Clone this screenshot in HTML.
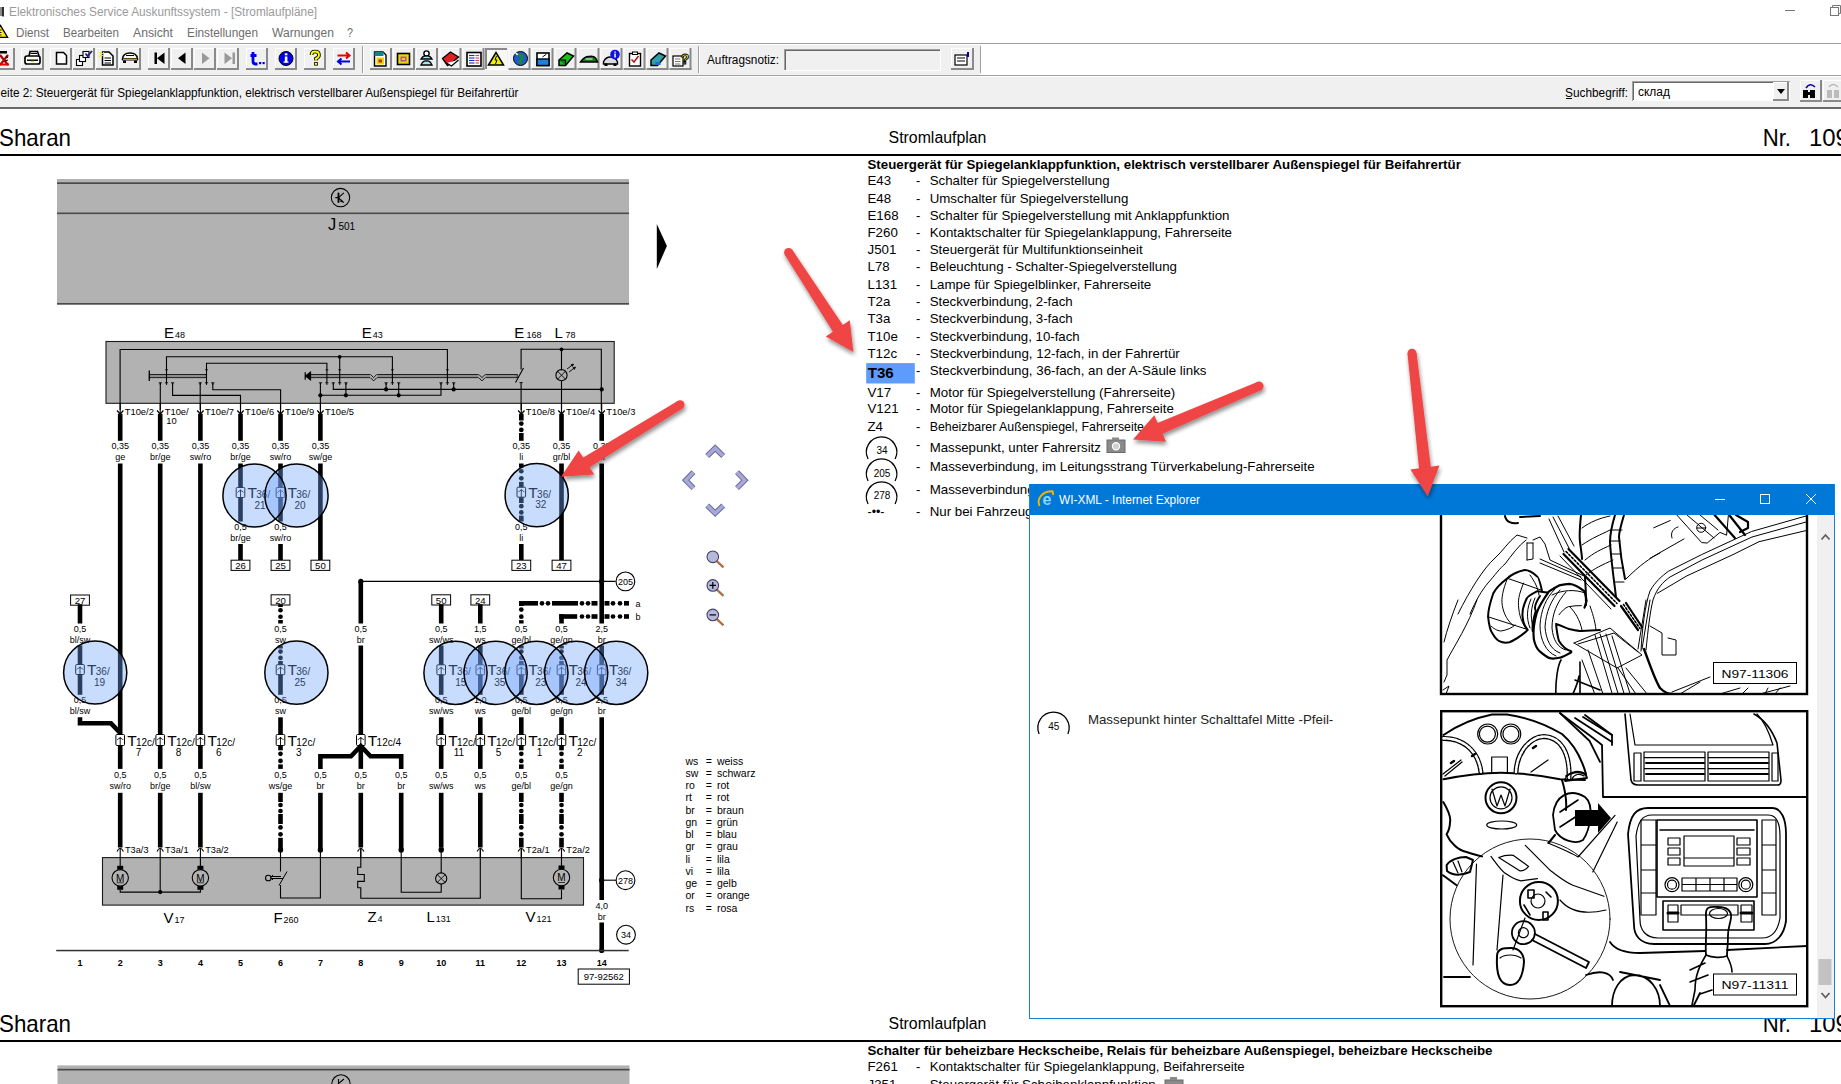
<!DOCTYPE html>
<html><head><meta charset="utf-8"><style>
html,body{margin:0;padding:0;background:#fff;overflow:hidden;width:1841px;height:1084px}
svg{display:block;font-family:"Liberation Sans", sans-serif}
</style></head><body>
<svg width="1841" height="1084" viewBox="0 0 1841 1084">
<defs><filter id="sh" x="-30%" y="-30%" width="160%" height="160%"><feGaussianBlur in="SourceAlpha" stdDeviation="2"/><feOffset dx="1" dy="3" result="b"/><feComponentTransfer><feFuncA type="linear" slope="0.45"/></feComponentTransfer><feMerge><feMergeNode/><feMergeNode in="SourceGraphic"/></feMerge></filter></defs>
<rect x="0" y="0" width="1841" height="43" fill="#fff" stroke="none" stroke-width="1"/>
<rect x="0" y="7" width="3" height="9" fill="#8a8a8a" stroke="none" stroke-width="1"/>
<rect x="2.3" y="7" width="1.5" height="9.5" fill="#000" stroke="none" stroke-width="1"/>
<text x="9" y="16" font-size="12.5" fill="#9a9a9a" text-anchor="start" font-weight="normal" textLength="308" lengthAdjust="spacingAndGlyphs">Elektronisches Service Auskunftssystem - [Stromlaufpläne]</text>
<line x1="1785" y1="10.5" x2="1795" y2="10.5" stroke="#777" stroke-width="1"/>
<rect x="1830.5" y="7.5" width="8" height="8" fill="none" stroke="#777" stroke-width="1"/>
<path d="M1832.5 7.5 V5.5 H1840.5 V13.5 H1838.5" stroke="#777" stroke-width="1" fill="none"/>
<path d="M-7 37.3 L0.5 25.5 L7.6 37.3 Z" stroke="#000" stroke-width="1.3" fill="#ffee00"/>
<path d="M0 30 H1.5 M0 32.5 H1.5 M0 35 H1.5" stroke="#000" stroke-width="0.9" fill="none"/>
<text x="16" y="37" font-size="12.5" fill="#6d6d6d" text-anchor="start" font-weight="normal" textLength="33" lengthAdjust="spacingAndGlyphs">Dienst</text>
<text x="63" y="37" font-size="12.5" fill="#6d6d6d" text-anchor="start" font-weight="normal" textLength="56" lengthAdjust="spacingAndGlyphs">Bearbeiten</text>
<text x="133" y="37" font-size="12.5" fill="#6d6d6d" text-anchor="start" font-weight="normal" textLength="40" lengthAdjust="spacingAndGlyphs">Ansicht</text>
<text x="187" y="37" font-size="12.5" fill="#6d6d6d" text-anchor="start" font-weight="normal" textLength="71" lengthAdjust="spacingAndGlyphs">Einstellungen</text>
<text x="272" y="37" font-size="12.5" fill="#6d6d6d" text-anchor="start" font-weight="normal" textLength="62" lengthAdjust="spacingAndGlyphs">Warnungen</text>
<text x="347" y="37" font-size="12.5" fill="#6d6d6d" text-anchor="start" font-weight="normal" textLength="6" lengthAdjust="spacingAndGlyphs">?</text>
<rect x="0" y="43" width="1841" height="1" fill="#a0a0a0" stroke="none" stroke-width="1"/>
<rect x="0" y="44" width="1841" height="1" fill="#fff" stroke="none" stroke-width="1"/>
<rect x="0" y="45" width="981" height="30" fill="#f0f0f0" stroke="none" stroke-width="1"/>
<rect x="0" y="75" width="1841" height="1" fill="#a0a0a0" stroke="none" stroke-width="1"/>
<rect x="0" y="76" width="1841" height="1" fill="#fff" stroke="none" stroke-width="1"/>
<rect x="0" y="77" width="1841" height="31" fill="#f0f0f0" stroke="none" stroke-width="1"/>
<rect x="0" y="107" width="1841" height="2" fill="#6a6a6a" stroke="none" stroke-width="1"/>
<rect x="-9" y="48" width="24" height="22" fill="#f0f0f0" stroke="none" stroke-width="1"/>
<rect x="-9" y="48" width="24" height="1" fill="#fff" stroke="none" stroke-width="1"/>
<rect x="-9" y="48" width="1" height="22" fill="#fff" stroke="none" stroke-width="1"/>
<rect x="-9" y="68" width="24" height="2" fill="#8a8a8a" stroke="none" stroke-width="1"/>
<rect x="13" y="48" width="2" height="22" fill="#8a8a8a" stroke="none" stroke-width="1"/>
<rect x="21" y="48" width="23" height="22" fill="#f0f0f0" stroke="none" stroke-width="1"/>
<rect x="21" y="48" width="23" height="1" fill="#fff" stroke="none" stroke-width="1"/>
<rect x="21" y="48" width="1" height="22" fill="#fff" stroke="none" stroke-width="1"/>
<rect x="21" y="68" width="23" height="2" fill="#8a8a8a" stroke="none" stroke-width="1"/>
<rect x="42" y="48" width="2" height="22" fill="#8a8a8a" stroke="none" stroke-width="1"/>
<rect x="50" y="48" width="22" height="22" fill="#f0f0f0" stroke="none" stroke-width="1"/>
<rect x="50" y="48" width="22" height="1" fill="#fff" stroke="none" stroke-width="1"/>
<rect x="50" y="48" width="1" height="22" fill="#fff" stroke="none" stroke-width="1"/>
<rect x="50" y="68" width="22" height="2" fill="#8a8a8a" stroke="none" stroke-width="1"/>
<rect x="70" y="48" width="2" height="22" fill="#8a8a8a" stroke="none" stroke-width="1"/>
<rect x="73" y="48" width="22" height="22" fill="#f0f0f0" stroke="none" stroke-width="1"/>
<rect x="73" y="48" width="22" height="1" fill="#fff" stroke="none" stroke-width="1"/>
<rect x="73" y="48" width="1" height="22" fill="#fff" stroke="none" stroke-width="1"/>
<rect x="73" y="68" width="22" height="2" fill="#8a8a8a" stroke="none" stroke-width="1"/>
<rect x="93" y="48" width="2" height="22" fill="#8a8a8a" stroke="none" stroke-width="1"/>
<rect x="96" y="48" width="22" height="22" fill="#f0f0f0" stroke="none" stroke-width="1"/>
<rect x="96" y="48" width="22" height="1" fill="#fff" stroke="none" stroke-width="1"/>
<rect x="96" y="48" width="1" height="22" fill="#fff" stroke="none" stroke-width="1"/>
<rect x="96" y="68" width="22" height="2" fill="#8a8a8a" stroke="none" stroke-width="1"/>
<rect x="116" y="48" width="2" height="22" fill="#8a8a8a" stroke="none" stroke-width="1"/>
<rect x="119" y="48" width="22" height="22" fill="#f0f0f0" stroke="none" stroke-width="1"/>
<rect x="119" y="48" width="22" height="1" fill="#fff" stroke="none" stroke-width="1"/>
<rect x="119" y="48" width="1" height="22" fill="#fff" stroke="none" stroke-width="1"/>
<rect x="119" y="68" width="22" height="2" fill="#8a8a8a" stroke="none" stroke-width="1"/>
<rect x="139" y="48" width="2" height="22" fill="#8a8a8a" stroke="none" stroke-width="1"/>
<rect x="148" y="48" width="22" height="22" fill="#f0f0f0" stroke="none" stroke-width="1"/>
<rect x="148" y="48" width="22" height="1" fill="#fff" stroke="none" stroke-width="1"/>
<rect x="148" y="48" width="1" height="22" fill="#fff" stroke="none" stroke-width="1"/>
<rect x="148" y="68" width="22" height="2" fill="#8a8a8a" stroke="none" stroke-width="1"/>
<rect x="168" y="48" width="2" height="22" fill="#8a8a8a" stroke="none" stroke-width="1"/>
<rect x="171" y="48" width="22" height="22" fill="#f0f0f0" stroke="none" stroke-width="1"/>
<rect x="171" y="48" width="22" height="1" fill="#fff" stroke="none" stroke-width="1"/>
<rect x="171" y="48" width="1" height="22" fill="#fff" stroke="none" stroke-width="1"/>
<rect x="171" y="68" width="22" height="2" fill="#8a8a8a" stroke="none" stroke-width="1"/>
<rect x="191" y="48" width="2" height="22" fill="#8a8a8a" stroke="none" stroke-width="1"/>
<rect x="194" y="48" width="22" height="22" fill="#f0f0f0" stroke="none" stroke-width="1"/>
<rect x="194" y="48" width="22" height="1" fill="#fff" stroke="none" stroke-width="1"/>
<rect x="194" y="48" width="1" height="22" fill="#fff" stroke="none" stroke-width="1"/>
<rect x="194" y="68" width="22" height="2" fill="#8a8a8a" stroke="none" stroke-width="1"/>
<rect x="214" y="48" width="2" height="22" fill="#8a8a8a" stroke="none" stroke-width="1"/>
<rect x="217" y="48" width="22" height="22" fill="#f0f0f0" stroke="none" stroke-width="1"/>
<rect x="217" y="48" width="22" height="1" fill="#fff" stroke="none" stroke-width="1"/>
<rect x="217" y="48" width="1" height="22" fill="#fff" stroke="none" stroke-width="1"/>
<rect x="217" y="68" width="22" height="2" fill="#8a8a8a" stroke="none" stroke-width="1"/>
<rect x="237" y="48" width="2" height="22" fill="#8a8a8a" stroke="none" stroke-width="1"/>
<rect x="246" y="48" width="22" height="22" fill="#f0f0f0" stroke="none" stroke-width="1"/>
<rect x="246" y="48" width="22" height="1" fill="#fff" stroke="none" stroke-width="1"/>
<rect x="246" y="48" width="1" height="22" fill="#fff" stroke="none" stroke-width="1"/>
<rect x="246" y="68" width="22" height="2" fill="#8a8a8a" stroke="none" stroke-width="1"/>
<rect x="266" y="48" width="2" height="22" fill="#8a8a8a" stroke="none" stroke-width="1"/>
<rect x="275" y="48" width="22" height="22" fill="#f0f0f0" stroke="none" stroke-width="1"/>
<rect x="275" y="48" width="22" height="1" fill="#fff" stroke="none" stroke-width="1"/>
<rect x="275" y="48" width="1" height="22" fill="#fff" stroke="none" stroke-width="1"/>
<rect x="275" y="68" width="22" height="2" fill="#8a8a8a" stroke="none" stroke-width="1"/>
<rect x="295" y="48" width="2" height="22" fill="#8a8a8a" stroke="none" stroke-width="1"/>
<rect x="304" y="48" width="22" height="22" fill="#f0f0f0" stroke="none" stroke-width="1"/>
<rect x="304" y="48" width="22" height="1" fill="#fff" stroke="none" stroke-width="1"/>
<rect x="304" y="48" width="1" height="22" fill="#fff" stroke="none" stroke-width="1"/>
<rect x="304" y="68" width="22" height="2" fill="#8a8a8a" stroke="none" stroke-width="1"/>
<rect x="324" y="48" width="2" height="22" fill="#8a8a8a" stroke="none" stroke-width="1"/>
<rect x="333" y="48" width="22" height="22" fill="#f0f0f0" stroke="none" stroke-width="1"/>
<rect x="333" y="48" width="22" height="1" fill="#fff" stroke="none" stroke-width="1"/>
<rect x="333" y="48" width="1" height="22" fill="#fff" stroke="none" stroke-width="1"/>
<rect x="333" y="68" width="22" height="2" fill="#8a8a8a" stroke="none" stroke-width="1"/>
<rect x="353" y="48" width="2" height="22" fill="#8a8a8a" stroke="none" stroke-width="1"/>
<rect x="362" y="46" width="1" height="27" fill="#a0a0a0" stroke="none" stroke-width="1"/>
<rect x="363" y="46" width="1" height="27" fill="#fff" stroke="none" stroke-width="1"/>
<rect x="370" y="48" width="22" height="22" fill="#f0f0f0" stroke="none" stroke-width="1"/>
<rect x="370" y="48" width="22" height="1" fill="#fff" stroke="none" stroke-width="1"/>
<rect x="370" y="48" width="1" height="22" fill="#fff" stroke="none" stroke-width="1"/>
<rect x="370" y="68" width="22" height="2" fill="#8a8a8a" stroke="none" stroke-width="1"/>
<rect x="390" y="48" width="2" height="22" fill="#8a8a8a" stroke="none" stroke-width="1"/>
<rect x="393" y="48" width="22" height="22" fill="#f0f0f0" stroke="none" stroke-width="1"/>
<rect x="393" y="48" width="22" height="1" fill="#fff" stroke="none" stroke-width="1"/>
<rect x="393" y="48" width="1" height="22" fill="#fff" stroke="none" stroke-width="1"/>
<rect x="393" y="68" width="22" height="2" fill="#8a8a8a" stroke="none" stroke-width="1"/>
<rect x="413" y="48" width="2" height="22" fill="#8a8a8a" stroke="none" stroke-width="1"/>
<rect x="416" y="48" width="22" height="22" fill="#f0f0f0" stroke="none" stroke-width="1"/>
<rect x="416" y="48" width="22" height="1" fill="#fff" stroke="none" stroke-width="1"/>
<rect x="416" y="48" width="1" height="22" fill="#fff" stroke="none" stroke-width="1"/>
<rect x="416" y="68" width="22" height="2" fill="#8a8a8a" stroke="none" stroke-width="1"/>
<rect x="436" y="48" width="2" height="22" fill="#8a8a8a" stroke="none" stroke-width="1"/>
<rect x="439.5" y="48" width="22.0" height="22" fill="#f0f0f0" stroke="none" stroke-width="1"/>
<rect x="439.5" y="48" width="22.0" height="1" fill="#fff" stroke="none" stroke-width="1"/>
<rect x="439.5" y="48" width="1" height="22" fill="#fff" stroke="none" stroke-width="1"/>
<rect x="439.5" y="68" width="22.0" height="2" fill="#8a8a8a" stroke="none" stroke-width="1"/>
<rect x="459.5" y="48" width="2" height="22" fill="#8a8a8a" stroke="none" stroke-width="1"/>
<rect x="462.5" y="48" width="22.0" height="22" fill="#f0f0f0" stroke="none" stroke-width="1"/>
<rect x="462.5" y="48" width="22.0" height="1" fill="#fff" stroke="none" stroke-width="1"/>
<rect x="462.5" y="48" width="1" height="22" fill="#fff" stroke="none" stroke-width="1"/>
<rect x="462.5" y="68" width="22.0" height="2" fill="#8a8a8a" stroke="none" stroke-width="1"/>
<rect x="482.5" y="48" width="2" height="22" fill="#8a8a8a" stroke="none" stroke-width="1"/>
<rect x="485" y="48" width="22" height="22" fill="#f7f7f7" stroke="none" stroke-width="1"/>
<rect x="485" y="48" width="22" height="2" fill="#8a8a8a" stroke="none" stroke-width="1"/>
<rect x="485" y="48" width="2" height="22" fill="#8a8a8a" stroke="none" stroke-width="1"/>
<rect x="485" y="69" width="22" height="1" fill="#fff" stroke="none" stroke-width="1"/>
<rect x="508.5" y="48" width="22.0" height="22" fill="#f0f0f0" stroke="none" stroke-width="1"/>
<rect x="508.5" y="48" width="22.0" height="1" fill="#fff" stroke="none" stroke-width="1"/>
<rect x="508.5" y="48" width="1" height="22" fill="#fff" stroke="none" stroke-width="1"/>
<rect x="508.5" y="68" width="22.0" height="2" fill="#8a8a8a" stroke="none" stroke-width="1"/>
<rect x="528.5" y="48" width="2" height="22" fill="#8a8a8a" stroke="none" stroke-width="1"/>
<rect x="531.5" y="48" width="22.0" height="22" fill="#f0f0f0" stroke="none" stroke-width="1"/>
<rect x="531.5" y="48" width="22.0" height="1" fill="#fff" stroke="none" stroke-width="1"/>
<rect x="531.5" y="48" width="1" height="22" fill="#fff" stroke="none" stroke-width="1"/>
<rect x="531.5" y="68" width="22.0" height="2" fill="#8a8a8a" stroke="none" stroke-width="1"/>
<rect x="551.5" y="48" width="2" height="22" fill="#8a8a8a" stroke="none" stroke-width="1"/>
<rect x="554.5" y="48" width="22.0" height="22" fill="#f0f0f0" stroke="none" stroke-width="1"/>
<rect x="554.5" y="48" width="22.0" height="1" fill="#fff" stroke="none" stroke-width="1"/>
<rect x="554.5" y="48" width="1" height="22" fill="#fff" stroke="none" stroke-width="1"/>
<rect x="554.5" y="68" width="22.0" height="2" fill="#8a8a8a" stroke="none" stroke-width="1"/>
<rect x="574.5" y="48" width="2" height="22" fill="#8a8a8a" stroke="none" stroke-width="1"/>
<rect x="577.5" y="48" width="22.0" height="22" fill="#f0f0f0" stroke="none" stroke-width="1"/>
<rect x="577.5" y="48" width="22.0" height="1" fill="#fff" stroke="none" stroke-width="1"/>
<rect x="577.5" y="48" width="1" height="22" fill="#fff" stroke="none" stroke-width="1"/>
<rect x="577.5" y="68" width="22.0" height="2" fill="#8a8a8a" stroke="none" stroke-width="1"/>
<rect x="597.5" y="48" width="2" height="22" fill="#8a8a8a" stroke="none" stroke-width="1"/>
<rect x="600.5" y="48" width="22.0" height="22" fill="#f0f0f0" stroke="none" stroke-width="1"/>
<rect x="600.5" y="48" width="22.0" height="1" fill="#fff" stroke="none" stroke-width="1"/>
<rect x="600.5" y="48" width="1" height="22" fill="#fff" stroke="none" stroke-width="1"/>
<rect x="600.5" y="68" width="22.0" height="2" fill="#8a8a8a" stroke="none" stroke-width="1"/>
<rect x="620.5" y="48" width="2" height="22" fill="#8a8a8a" stroke="none" stroke-width="1"/>
<rect x="623.5" y="48" width="22.0" height="22" fill="#f0f0f0" stroke="none" stroke-width="1"/>
<rect x="623.5" y="48" width="22.0" height="1" fill="#fff" stroke="none" stroke-width="1"/>
<rect x="623.5" y="48" width="1" height="22" fill="#fff" stroke="none" stroke-width="1"/>
<rect x="623.5" y="68" width="22.0" height="2" fill="#8a8a8a" stroke="none" stroke-width="1"/>
<rect x="643.5" y="48" width="2" height="22" fill="#8a8a8a" stroke="none" stroke-width="1"/>
<rect x="646.5" y="48" width="22.0" height="22" fill="#f0f0f0" stroke="none" stroke-width="1"/>
<rect x="646.5" y="48" width="22.0" height="1" fill="#fff" stroke="none" stroke-width="1"/>
<rect x="646.5" y="48" width="1" height="22" fill="#fff" stroke="none" stroke-width="1"/>
<rect x="646.5" y="68" width="22.0" height="2" fill="#8a8a8a" stroke="none" stroke-width="1"/>
<rect x="666.5" y="48" width="2" height="22" fill="#8a8a8a" stroke="none" stroke-width="1"/>
<rect x="669.5" y="48" width="22.0" height="22" fill="#f0f0f0" stroke="none" stroke-width="1"/>
<rect x="669.5" y="48" width="22.0" height="1" fill="#fff" stroke="none" stroke-width="1"/>
<rect x="669.5" y="48" width="1" height="22" fill="#fff" stroke="none" stroke-width="1"/>
<rect x="669.5" y="68" width="22.0" height="2" fill="#8a8a8a" stroke="none" stroke-width="1"/>
<rect x="689.5" y="48" width="2" height="22" fill="#8a8a8a" stroke="none" stroke-width="1"/>
<rect x="698" y="46" width="1" height="27" fill="#a0a0a0" stroke="none" stroke-width="1"/>
<rect x="699" y="46" width="1" height="27" fill="#fff" stroke="none" stroke-width="1"/>
<rect x="980" y="46" width="1" height="27" fill="#a0a0a0" stroke="none" stroke-width="1"/>
<rect x="0" y="51" width="7" height="2.5" fill="#000" stroke="none" stroke-width="1"/>
<path d="M0 55 L8 65 M8 55 L0 65" stroke="#b00000" stroke-width="2.2" fill="none"/>
<path d="M6 56 L8 58 M5 61 L8 60" stroke="#000" stroke-width="1" fill="none"/>
<rect x="0" y="63.5" width="9" height="2" fill="#e00000" stroke="none" stroke-width="1"/>
<path d="M29 56 L30 51.5 H37.5 L39 56" stroke="#000" stroke-width="1.6" fill="#fff"/>
<path d="M30.5 53.5 H37" stroke="#000" stroke-width="1" fill="none"/>
<path d="M25 58 Q25 56 27 56 H38 Q40 56 40 58 V62 Q40 64 38 64 H27 Q25 64 25 62 Z" stroke="#000" stroke-width="1.7" fill="#fff"/>
<rect x="27" y="59.5" width="11" height="1.5" fill="#000" stroke="none" stroke-width="1"/>
<rect x="31" y="60.8" width="3" height="1.4" fill="#e0e000" stroke="none" stroke-width="1"/>
<path d="M56.5 52.5 H63.5 L66.5 55.5 V64 H56.5 Z" stroke="#000" stroke-width="1.5" fill="#fff"/>
<rect x="76.5" y="59.5" width="6" height="6" fill="#fff" stroke="#000" stroke-width="1.1"/>
<rect x="79.5" y="55.5" width="6" height="6" fill="#fff" stroke="#000" stroke-width="1.1"/>
<rect x="83" y="51.5" width="6" height="6" fill="#fff" stroke="#000" stroke-width="1.1"/>
<path d="M85.5 53.5 L87.5 56 L92 51" stroke="#1a1aa0" stroke-width="1.8" fill="none"/>
<path d="M102.5 52 H109 L113 56 V65 H102.5 Z" stroke="#000" stroke-width="1.5" fill="#fff"/>
<path d="M104.5 58 H111 M104.5 60.5 H111 M104.5 63 H111" stroke="#000" stroke-width="1" fill="none"/>
<path d="M99 52 L104 57 M104 52 L99 57 M101.5 51 V58" stroke="#e8e800" stroke-width="1" fill="none"/>
<path d="M122.5 59 Q123 53 130 53 Q137 53 137.5 59 Z" stroke="#000" stroke-width="1.6" fill="#fff"/>
<path d="M126 55.5 H134" stroke="#000" stroke-width="1" fill="none"/>
<rect x="122" y="58" width="16" height="2.5" fill="#000" stroke="none" stroke-width="1"/>
<rect x="123" y="58.6" width="14" height="1.3" fill="#c8b400" stroke="none" stroke-width="1"/>
<rect x="123" y="60.5" width="3" height="2.5" fill="#000" stroke="none" stroke-width="1"/>
<rect x="134" y="60.5" width="3" height="2.5" fill="#000" stroke="none" stroke-width="1"/>
<rect x="154.5" y="52.5" width="2.5" height="11.5" fill="#000" stroke="none" stroke-width="1"/>
<path d="M164.5 52.5 L157 58.2 L164.5 64 Z" stroke="#000" stroke-width="0" fill="#000"/>
<path d="M185.5 52.5 L178 58.2 L185.5 64 Z" stroke="#000" stroke-width="0" fill="#000"/>
<path d="M202 52.5 L209.5 58.2 L202 64 Z" stroke="#999" stroke-width="0" fill="#999"/>
<path d="M224.5 52.5 L232 58.2 L224.5 64 Z" stroke="#999" stroke-width="0" fill="#999"/>
<rect x="232.5" y="52.5" width="2.5" height="11.5" fill="#999" stroke="none" stroke-width="1"/>
<path d="M253 52 V61.5 Q253 64 256 64 H257.5 M250.5 55.5 H256.5" stroke="#0000e8" stroke-width="2.8" fill="none"/>
<rect x="259" y="62" width="2.2" height="2.2" fill="#0000e8" stroke="none" stroke-width="1"/>
<rect x="262.5" y="62" width="2.2" height="2.2" fill="#0000e8" stroke="none" stroke-width="1"/>
<circle cx="286" cy="58.5" r="7" fill="#0000e8" stroke="#000" stroke-width="1"/>
<rect x="284.8" y="56.5" width="2.6" height="6" fill="#fff" stroke="none" stroke-width="1"/>
<rect x="284.8" y="53.3" width="2.6" height="2" fill="#fff" stroke="none" stroke-width="1"/>
<rect x="283.5" y="61.5" width="5" height="1.2" fill="#fff" stroke="none" stroke-width="1"/>
<path d="M311.5 55 Q311.5 51.5 315 51.5 Q319 51.5 319 55 Q319 57.5 316 58.5 V60.5" stroke="#000" stroke-width="3.6" fill="none"/>
<path d="M311.5 55 Q311.5 51.5 315 51.5 Q319 51.5 319 55 Q319 57.5 316 58.5 V60.5" stroke="#ffff00" stroke-width="1.8" fill="none"/>
<rect x="314.2" y="62" width="3.6" height="3.6" fill="#000" stroke="none" stroke-width="1"/>
<rect x="315" y="62.8" width="2" height="2" fill="#ffff00" stroke="none" stroke-width="1"/>
<path d="M337.5 55.5 H349 M346 52.5 L349.5 55.5 L346 58.5" stroke="#e80000" stroke-width="2" fill="none"/>
<path d="M350 61.5 H338.5 M341.5 58.5 L338 61.5 L341.5 64.5" stroke="#0000e8" stroke-width="2" fill="none"/>
<path d="M374.5 52 H383 L386 55 V66 H374.5 Z" stroke="#000" stroke-width="1.4" fill="#fff"/>
<rect x="374.5" y="52" width="9" height="4" fill="#1a8080" stroke="none" stroke-width="1"/>
<rect x="376.5" y="57.5" width="7.5" height="7" fill="#e8d800" stroke="none" stroke-width="1"/>
<rect x="378.5" y="59.5" width="3.5" height="3" fill="#c03030" stroke="none" stroke-width="1"/>
<rect x="397.5" y="53.5" width="12" height="11" fill="#e8d800" stroke="#000" stroke-width="1.6"/>
<rect x="400.5" y="56.5" width="6" height="5" fill="#b050b0" stroke="none" stroke-width="1"/>
<rect x="402" y="58" width="3" height="2" fill="#e8d800" stroke="none" stroke-width="1"/>
<circle cx="426.5" cy="53.5" r="2.6" fill="#fff" stroke="#000" stroke-width="1.4"/>
<path d="M421 59 Q423 55.5 426.5 56 Q430 55.5 432 59 Z" stroke="#000" stroke-width="1.3" fill="#9ee8f0"/>
<path d="M421 65 Q423 60.5 426.5 61 Q430 60.5 432 65 Z" stroke="#000" stroke-width="1.3" fill="#9ee8f0"/>
<path d="M442.5 58.5 L450.5 52 L458.5 57 L451.5 63 L447.5 65.5 Z" stroke="#000" stroke-width="1.4" fill="#e02020"/>
<path d="M446.5 63 L451.5 66 L458.5 60" stroke="#000" stroke-width="1.2" fill="#fff"/>
<rect x="467.0" y="52.5" width="14" height="13.5" fill="#fff" stroke="#000" stroke-width="1.6"/>
<line x1="469.0" y1="55.5" x2="474.5" y2="55.5" stroke="#1a30c0" stroke-width="1.1"/>
<line x1="475.5" y1="55.5" x2="479.0" y2="55.5" stroke="#e04040" stroke-width="1.1"/>
<line x1="469.0" y1="58" x2="474.5" y2="58" stroke="#1a30c0" stroke-width="1.1"/>
<line x1="475.5" y1="58" x2="479.0" y2="58" stroke="#e04040" stroke-width="1.1"/>
<line x1="469.0" y1="60.5" x2="474.5" y2="60.5" stroke="#1a30c0" stroke-width="1.1"/>
<line x1="475.5" y1="60.5" x2="479.0" y2="60.5" stroke="#e04040" stroke-width="1.1"/>
<line x1="469.0" y1="63" x2="474.5" y2="63" stroke="#1a30c0" stroke-width="1.1"/>
<line x1="475.5" y1="63" x2="479.0" y2="63" stroke="#e04040" stroke-width="1.1"/>
<path d="M488.5 65 L496 52.5 L503.5 65 Z" stroke="#000" stroke-width="1.5" fill="#f0f000"/>
<path d="M496.5 56 L495 60 H497 L495.5 64" stroke="#000" stroke-width="1" fill="none"/>
<circle cx="520.5" cy="58.5" r="7" fill="#1e5cc8" stroke="#000" stroke-width="1"/>
<path d="M518.5 54 Q523.5 56 521.5 59 Q519.5 62 521.5 64" stroke="#1a8a2a" stroke-width="3" fill="none"/>
<path d="M515.5 54 Q516.5 53 517.5 55" stroke="#fff" stroke-width="1.5" fill="none"/>
<rect x="537.0" y="53" width="12" height="12.5" fill="#fff" stroke="#000" stroke-width="1.6"/>
<rect x="537.0" y="59" width="12" height="6.5" fill="#2080e0" stroke="#000" stroke-width="1.4"/>
<path d="M542.5 57 L546.5 54" stroke="#000" stroke-width="1" fill="none"/>
<path d="M559.0 60 L567.0 53 L573.5 56 L565.5 65.5 L559.0 65.5 Z" stroke="#000" stroke-width="1.5" fill="#18c018"/>
<path d="M559.0 60 H565.5 L565.5 65.5" stroke="#000" stroke-width="1.2" fill="#108a10"/>
<path d="M580.5 62 Q584.5 56 589.5 56.5 Q595.5 55 597.5 62 Z" stroke="#000" stroke-width="1.4" fill="#1a7a1a"/>
<path d="M585.5 59 H592.5" stroke="#fff" stroke-width="1" fill="none"/>
<path d="M603.5 62 Q605.5 57 610.5 57 Q615.5 57 617.5 62 V64 H603.5 Z" stroke="#000" stroke-width="1.4" fill="#ddd"/>
<rect x="604.5" y="63.5" width="3" height="2.5" fill="#000" stroke="none" stroke-width="1"/>
<rect x="613.5" y="63.5" width="3" height="2.5" fill="#000" stroke="none" stroke-width="1"/>
<circle cx="615.0" cy="54.5" r="4.8" fill="#1010e8" stroke="none" stroke-width="0"/>
<rect x="614.3" y="53.5" width="1.5" height="4" fill="#fff" stroke="none" stroke-width="1"/>
<rect x="614.3" y="51.5" width="1.5" height="1.2" fill="#fff" stroke="none" stroke-width="1"/>
<rect x="629.5" y="53.5" width="11" height="12.5" fill="#fff" stroke="#000" stroke-width="1.4"/>
<rect x="632.5" y="52" width="5" height="2.5" fill="#fff" stroke="#000" stroke-width="1"/>
<path d="M631.5 59.5 L634.0 62 L638.5 56" stroke="#c01010" stroke-width="1.5" fill="none"/>
<path d="M651.0 60 L659.0 53 L665.5 56 L657.5 65.5 L651.0 65.5 Z" stroke="#000" stroke-width="1.5" fill="#30a0a8"/>
<rect x="655.5" y="62" width="5" height="3" fill="#1a6ae0" stroke="none" stroke-width="1"/>
<rect x="673.0" y="56" width="10" height="10" fill="#fff" stroke="#000" stroke-width="1.2"/>
<path d="M675.0 59 H680.5 M675.0 61.5 H680.5 M675.0 64 H680.5" stroke="#666" stroke-width="0.9" fill="none"/>
<text x="685.0" y="64" font-size="14" fill="#ffff00" text-anchor="middle" font-weight="bold" stroke="#000" stroke-width="0.9">?</text>
<text x="707" y="64.4" font-size="12.5" fill="#000" text-anchor="start" font-weight="normal" textLength="72" lengthAdjust="spacingAndGlyphs">Auftragsnotiz:</text>
<rect x="784" y="49" width="157" height="22" fill="#f0f0f0" stroke="none" stroke-width="1"/>
<rect x="784" y="49" width="157" height="1" fill="#a0a0a0" stroke="none" stroke-width="1"/>
<rect x="784" y="49" width="1" height="22" fill="#a0a0a0" stroke="none" stroke-width="1"/>
<rect x="784" y="70" width="157" height="1" fill="#fff" stroke="none" stroke-width="1"/>
<rect x="940" y="49" width="1" height="22" fill="#fff" stroke="none" stroke-width="1"/>
<rect x="785" y="50" width="155" height="1" fill="#696969" stroke="none" stroke-width="1"/>
<rect x="785" y="50" width="1" height="20" fill="#696969" stroke="none" stroke-width="1"/>
<rect x="951" y="48" width="23" height="22" fill="#f0f0f0" stroke="none" stroke-width="1"/>
<rect x="951" y="48" width="23" height="1" fill="#fff" stroke="none" stroke-width="1"/>
<rect x="951" y="48" width="1" height="22" fill="#fff" stroke="none" stroke-width="1"/>
<rect x="951" y="68" width="23" height="2" fill="#8a8a8a" stroke="none" stroke-width="1"/>
<rect x="972" y="48" width="2" height="22" fill="#8a8a8a" stroke="none" stroke-width="1"/>
<rect x="955" y="55" width="12" height="10" fill="#fff" stroke="#000" stroke-width="1.2"/>
<path d="M957 58 H965 M957 61 H965" stroke="#000" stroke-width="1" fill="none"/>
<rect x="967" y="52" width="2" height="5" fill="#00a" stroke="none" stroke-width="1"/>
<text x="0.5" y="96.7" font-size="12.5" fill="#000" text-anchor="start" font-weight="normal" textLength="518" lengthAdjust="spacingAndGlyphs">eite 2: Steuergerät für Spiegelanklappfunktion, elektrisch verstellbarer Außenspiegel für Beifahrertür</text>
<text x="1565" y="97" font-size="12.5" fill="#000" text-anchor="start" font-weight="normal" textLength="63" lengthAdjust="spacingAndGlyphs">Suchbegriff:</text>
<line x1="1566" y1="98.5" x2="1572" y2="98.5" stroke="#000" stroke-width="1"/>
<rect x="1632" y="81" width="158" height="20" fill="#fff" stroke="none" stroke-width="1"/>
<rect x="1632" y="81" width="158" height="1" fill="#a0a0a0" stroke="none" stroke-width="1"/>
<rect x="1632" y="81" width="1" height="20" fill="#a0a0a0" stroke="none" stroke-width="1"/>
<rect x="1633" y="82" width="156" height="1" fill="#696969" stroke="none" stroke-width="1"/>
<rect x="1633" y="82" width="1" height="18" fill="#696969" stroke="none" stroke-width="1"/>
<text x="1638" y="96" font-size="12.5" fill="#000" text-anchor="start" font-weight="normal" textLength="32" lengthAdjust="spacingAndGlyphs">склад</text>
<rect x="1773" y="82" width="16" height="19" fill="#f0f0f0" stroke="none" stroke-width="1"/>
<rect x="1773" y="82" width="16" height="1" fill="#fff" stroke="none" stroke-width="1"/>
<rect x="1773" y="82" width="1" height="19" fill="#fff" stroke="none" stroke-width="1"/>
<rect x="1773" y="99" width="16" height="2" fill="#8a8a8a" stroke="none" stroke-width="1"/>
<rect x="1787" y="82" width="2" height="19" fill="#8a8a8a" stroke="none" stroke-width="1"/>
<path d="M1777 89 L1785 89 L1781 94 Z" stroke="#000" stroke-width="0" fill="#000"/>
<rect x="1800" y="80" width="22" height="22" fill="#f0f0f0" stroke="none" stroke-width="1"/>
<rect x="1800" y="80" width="22" height="1" fill="#fff" stroke="none" stroke-width="1"/>
<rect x="1800" y="80" width="1" height="22" fill="#fff" stroke="none" stroke-width="1"/>
<rect x="1800" y="100" width="22" height="2" fill="#8a8a8a" stroke="none" stroke-width="1"/>
<rect x="1820" y="80" width="2" height="22" fill="#8a8a8a" stroke="none" stroke-width="1"/>
<rect x="1803" y="90" width="5" height="8" fill="#000" stroke="none" stroke-width="1"/>
<rect x="1810" y="90" width="5" height="8" fill="#000" stroke="none" stroke-width="1"/>
<rect x="1806" y="92" width="6" height="3" fill="#000" stroke="none" stroke-width="1"/>
<path d="M1806 88 Q1810 82 1815 87" stroke="#00a" stroke-width="1.6" fill="none"/>
<rect x="1823" y="80" width="22" height="22" fill="#f0f0f0" stroke="none" stroke-width="1"/>
<rect x="1823" y="80" width="22" height="1" fill="#fff" stroke="none" stroke-width="1"/>
<rect x="1823" y="80" width="1" height="22" fill="#fff" stroke="none" stroke-width="1"/>
<rect x="1823" y="100" width="22" height="2" fill="#8a8a8a" stroke="none" stroke-width="1"/>
<rect x="1843" y="80" width="2" height="22" fill="#8a8a8a" stroke="none" stroke-width="1"/>
<rect x="1827" y="90" width="5" height="8" fill="#bbb" stroke="none" stroke-width="1"/>
<rect x="1834" y="90" width="5" height="8" fill="#bbb" stroke="none" stroke-width="1"/>
<path d="M1829 87 Q1833 82 1838 87" stroke="#bbb" stroke-width="1.6" fill="none"/>
<rect x="0" y="109" width="1841" height="975" fill="#fff" stroke="none" stroke-width="1"/>
<text x="-1" y="145.7" font-size="24" fill="#000" text-anchor="start" font-weight="normal" textLength="72" lengthAdjust="spacingAndGlyphs">Sharan</text>
<text x="888.6" y="143" font-size="16" fill="#000" text-anchor="start" font-weight="normal" textLength="97.8" lengthAdjust="spacingAndGlyphs">Stromlaufplan</text>
<text x="1762.7" y="146" font-size="24" fill="#000" text-anchor="start" font-weight="normal" textLength="28.3" lengthAdjust="spacingAndGlyphs">Nr.</text>
<text x="1808.9" y="146" font-size="24" fill="#000" text-anchor="start" font-weight="normal">109</text>
<rect x="0" y="154" width="1841" height="2" fill="#000" stroke="none" stroke-width="1"/>
<text x="867.5" y="169.1" font-size="13" fill="#000" text-anchor="start" font-weight="bold" textLength="593.3" lengthAdjust="spacingAndGlyphs">Steuergerät für Spiegelanklappfunktion, elektrisch verstellbarer Außenspiegel für Beifahrertür</text>
<text x="867.5" y="184.8" font-size="13.3" fill="#000" text-anchor="start" font-weight="normal">E43</text>
<text x="916" y="184.8" font-size="13" fill="#000" text-anchor="start" font-weight="normal">-</text>
<text x="929.7" y="184.8" font-size="13.3" fill="#000" text-anchor="start" font-weight="normal" textLength="179.9" lengthAdjust="spacingAndGlyphs">Schalter für Spiegelverstellung</text>
<text x="867.5" y="202.5" font-size="13.3" fill="#000" text-anchor="start" font-weight="normal">E48</text>
<text x="916" y="202.5" font-size="13" fill="#000" text-anchor="start" font-weight="normal">-</text>
<text x="929.7" y="202.5" font-size="13.3" fill="#000" text-anchor="start" font-weight="normal" textLength="198.6" lengthAdjust="spacingAndGlyphs">Umschalter für Spiegelverstellung</text>
<text x="867.5" y="219.6" font-size="13.3" fill="#000" text-anchor="start" font-weight="normal">E168</text>
<text x="916" y="219.6" font-size="13" fill="#000" text-anchor="start" font-weight="normal">-</text>
<text x="929.7" y="219.6" font-size="13.3" fill="#000" text-anchor="start" font-weight="normal" textLength="299.8" lengthAdjust="spacingAndGlyphs">Schalter für Spiegelverstellung mit Anklappfunktion</text>
<text x="867.5" y="236.5" font-size="13.3" fill="#000" text-anchor="start" font-weight="normal">F260</text>
<text x="916" y="236.5" font-size="13" fill="#000" text-anchor="start" font-weight="normal">-</text>
<text x="929.7" y="236.5" font-size="13.3" fill="#000" text-anchor="start" font-weight="normal" textLength="302.3" lengthAdjust="spacingAndGlyphs">Kontaktschalter für Spiegelanklappung, Fahrerseite</text>
<text x="867.5" y="253.9" font-size="13.3" fill="#000" text-anchor="start" font-weight="normal">J501</text>
<text x="916" y="253.9" font-size="13" fill="#000" text-anchor="start" font-weight="normal">-</text>
<text x="929.7" y="253.9" font-size="13.3" fill="#000" text-anchor="start" font-weight="normal" textLength="212.9" lengthAdjust="spacingAndGlyphs">Steuergerät für Multifunktionseinheit</text>
<text x="867.5" y="271.4" font-size="13.3" fill="#000" text-anchor="start" font-weight="normal">L78</text>
<text x="916" y="271.4" font-size="13" fill="#000" text-anchor="start" font-weight="normal">-</text>
<text x="929.7" y="271.4" font-size="13.3" fill="#000" text-anchor="start" font-weight="normal" textLength="247.3" lengthAdjust="spacingAndGlyphs">Beleuchtung - Schalter-Spiegelverstellung</text>
<text x="867.5" y="288.6" font-size="13.3" fill="#000" text-anchor="start" font-weight="normal">L131</text>
<text x="916" y="288.6" font-size="13" fill="#000" text-anchor="start" font-weight="normal">-</text>
<text x="929.7" y="288.6" font-size="13.3" fill="#000" text-anchor="start" font-weight="normal" textLength="221.6" lengthAdjust="spacingAndGlyphs">Lampe für Spiegelblinker, Fahrerseite</text>
<text x="867.5" y="306" font-size="13.3" fill="#000" text-anchor="start" font-weight="normal">T2a</text>
<text x="916" y="306" font-size="13" fill="#000" text-anchor="start" font-weight="normal">-</text>
<text x="929.7" y="306" font-size="13.3" fill="#000" text-anchor="start" font-weight="normal" textLength="143.0" lengthAdjust="spacingAndGlyphs">Steckverbindung, 2-fach</text>
<text x="867.5" y="323.2" font-size="13.3" fill="#000" text-anchor="start" font-weight="normal">T3a</text>
<text x="916" y="323.2" font-size="13" fill="#000" text-anchor="start" font-weight="normal">-</text>
<text x="929.7" y="323.2" font-size="13.3" fill="#000" text-anchor="start" font-weight="normal" textLength="143.0" lengthAdjust="spacingAndGlyphs">Steckverbindung, 3-fach</text>
<text x="867.5" y="340.7" font-size="13.3" fill="#000" text-anchor="start" font-weight="normal">T10e</text>
<text x="916" y="340.7" font-size="13" fill="#000" text-anchor="start" font-weight="normal">-</text>
<text x="929.7" y="340.7" font-size="13.3" fill="#000" text-anchor="start" font-weight="normal" textLength="150.0" lengthAdjust="spacingAndGlyphs">Steckverbindung, 10-fach</text>
<text x="867.5" y="358.1" font-size="13.3" fill="#000" text-anchor="start" font-weight="normal">T12c</text>
<text x="916" y="358.1" font-size="13" fill="#000" text-anchor="start" font-weight="normal">-</text>
<text x="929.7" y="358.1" font-size="13.3" fill="#000" text-anchor="start" font-weight="normal" textLength="250.1" lengthAdjust="spacingAndGlyphs">Steckverbindung, 12-fach, in der Fahrertür</text>
<text x="916" y="375.2" font-size="13" fill="#000" text-anchor="start" font-weight="normal">-</text>
<text x="929.7" y="375.2" font-size="13.3" fill="#000" text-anchor="start" font-weight="normal" textLength="276.8" lengthAdjust="spacingAndGlyphs">Steckverbindung, 36-fach, an der A-Säule links</text>
<text x="867.5" y="396.7" font-size="13.3" fill="#000" text-anchor="start" font-weight="normal">V17</text>
<text x="916" y="396.7" font-size="13" fill="#000" text-anchor="start" font-weight="normal">-</text>
<text x="929.7" y="396.7" font-size="13.3" fill="#000" text-anchor="start" font-weight="normal" textLength="245.6" lengthAdjust="spacingAndGlyphs">Motor für Spiegelverstellung (Fahrerseite)</text>
<text x="867.5" y="413.4" font-size="13.3" fill="#000" text-anchor="start" font-weight="normal">V121</text>
<text x="916" y="413.4" font-size="13" fill="#000" text-anchor="start" font-weight="normal">-</text>
<text x="929.7" y="413.4" font-size="13.3" fill="#000" text-anchor="start" font-weight="normal" textLength="244.2" lengthAdjust="spacingAndGlyphs">Motor für Spiegelanklappung, Fahrerseite</text>
<text x="867.5" y="430.5" font-size="13.3" fill="#000" text-anchor="start" font-weight="normal">Z4</text>
<text x="916" y="430.5" font-size="13" fill="#000" text-anchor="start" font-weight="normal">-</text>
<text x="929.7" y="430.5" font-size="13.3" fill="#000" text-anchor="start" font-weight="normal" textLength="214.3" lengthAdjust="spacingAndGlyphs">Beheizbarer Außenspiegel, Fahrerseite</text>
<rect x="866.2" y="363.1" width="48.6" height="20.4" fill="#5e9cfc" stroke="none" stroke-width="1"/>
<text x="867.7" y="378.3" font-size="14" fill="#000" text-anchor="start" font-weight="bold" textLength="26" lengthAdjust="spacingAndGlyphs">T36</text>
<path d="M868.1 459.0 A15.2 15.2 0 1 1 895.1 459.0" fill="none" stroke="#000" stroke-width="1.3"/>
<text x="882" y="454.2" font-size="10" fill="#000" text-anchor="middle" font-weight="normal">34</text>
<text x="916" y="448.8" font-size="13" fill="#000" text-anchor="start" font-weight="normal">-</text>
<text x="929.7" y="451.5" font-size="13.3" fill="#000" text-anchor="start" font-weight="normal" textLength="171.2" lengthAdjust="spacingAndGlyphs">Massepunkt, unter Fahrersitz</text>
<path d="M868.1 481.0 A15.2 15.2 0 1 1 895.1 481.0" fill="none" stroke="#000" stroke-width="1.3"/>
<text x="882" y="476.5" font-size="10" fill="#000" text-anchor="middle" font-weight="normal">205</text>
<text x="916" y="470.9" font-size="13" fill="#000" text-anchor="start" font-weight="normal">-</text>
<text x="929.7" y="470.9" font-size="13.3" fill="#000" text-anchor="start" font-weight="normal" textLength="384.9" lengthAdjust="spacingAndGlyphs">Masseverbindung, im Leitungsstrang Türverkabelung-Fahrerseite</text>
<path d="M868.1 504.0 A15.2 15.2 0 1 1 895.1 504.0" fill="none" stroke="#000" stroke-width="1.3"/>
<text x="882" y="499.3" font-size="10" fill="#000" text-anchor="middle" font-weight="normal">278</text>
<text x="916" y="493.6" font-size="13" fill="#000" text-anchor="start" font-weight="normal">-</text>
<text x="929.7" y="493.6" font-size="13.3" fill="#000" text-anchor="start" font-weight="normal" textLength="384.9" lengthAdjust="spacingAndGlyphs">Masseverbindung, im Leitungsstrang Türverkabelung-Fahrerseite</text>
<rect x="1107" y="440" width="18" height="12.5" fill="#8a8a8a" stroke="#6a6a6a" stroke-width="1"/>
<rect x="1112" y="437.5" width="7" height="3" fill="#8a8a8a" stroke="none" stroke-width="1"/>
<circle cx="1116" cy="446.3" r="3.6" fill="#d0d0d0" stroke="#fff" stroke-width="1.2"/>
<text x="867.5" y="516.4" font-size="12" fill="#000" text-anchor="start" font-weight="normal" textLength="17" lengthAdjust="spacingAndGlyphs">-••-</text>
<text x="916" y="516.4" font-size="13" fill="#000" text-anchor="start" font-weight="normal">-</text>
<text x="929.7" y="516.4" font-size="13.3" fill="#000" text-anchor="start" font-weight="normal">Nur bei Fahrzeugen mit Spiegelanklappfunktion</text>
<rect x="57" y="179" width="572" height="125" fill="#b2b2b2" stroke="none" stroke-width="1"/>
<rect x="57" y="182.3" width="572" height="1.7" fill="#4a4a4a" stroke="none" stroke-width="1"/>
<rect x="57" y="212.5" width="572" height="1.6" fill="#4a4a4a" stroke="none" stroke-width="1"/>
<rect x="57" y="303" width="572" height="1.7" fill="#4a4a4a" stroke="none" stroke-width="1"/>
<circle cx="340.5" cy="197.6" r="9.2" fill="none" stroke="#000" stroke-width="1.1"/>
<path d="M335.3 197.6 H338.5 M338.5 192.8 V202.6 M338.5 197.6 L343.9 192.9 M338.5 198 L343.9 202.6" stroke="#000" stroke-width="1.1" fill="none"/>
<rect x="337.6" y="192.8" width="1.8" height="9.8" fill="#000" stroke="none" stroke-width="1"/>
<path d="M343.2 202.4 L339.8 201.6 L341.8 199.4 Z" stroke="#000" stroke-width="0" fill="#000"/>
<text x="328" y="229.7" font-size="16.4" fill="#000">J<tspan font-size="10" dx="2.2">501</tspan></text>
<path d="M656.8 224 L666.9 246 L656.8 268.9 Z" stroke="#000" stroke-width="0" fill="#000"/>
<rect x="106" y="341.5" width="508.2" height="61.8" fill="#b2b2b2" stroke="#1a1a1a" stroke-width="1.1"/>
<text x="163.9" y="337.6" font-size="15" fill="#000">E<tspan font-size="9" dx="1">48</tspan></text>
<text x="361.8" y="337.6" font-size="15" fill="#000">E<tspan font-size="9" dx="1">43</tspan></text>
<text x="514.3" y="337.6" font-size="15" fill="#000">E<tspan font-size="9" dx="2.2">168</tspan></text>
<text x="554.4" y="337.6" font-size="15" fill="#000">L<tspan font-size="9" dx="2.8">78</tspan></text>
<rect x="149.3" y="374.4" width="57.0" height="3.3" fill="#8c8c8c" stroke="#000" stroke-width="0.8"/>
<rect x="310" y="374.4" width="207.20000000000005" height="3.3" fill="#8c8c8c" stroke="#000" stroke-width="0.8"/>
<path d="M149.3 370.5 V381" stroke="#000" stroke-width="1.3" fill="none"/>
<path d="M305.6 376 L310.5 372.3 V379.7 Z M305.2 372.3 V379.7" stroke="#000" stroke-width="1.2" fill="#000"/>
<rect x="370.0" y="373.8" width="7.2" height="4.4" fill="#b2b2b2" stroke="none" stroke-width="1"/>
<path d="M370.4 374.4 L373.6 377.6 L376.8 374.4 M370.4 377.7 L373.6 380.9 L376.8 377.7" stroke="#000" stroke-width="0.9" fill="none"/>
<rect x="478.4" y="373.8" width="7.2" height="4.4" fill="#b2b2b2" stroke="none" stroke-width="1"/>
<path d="M478.8 374.4 L482.0 377.6 L485.2 374.4 M478.8 377.7 L482.0 380.9 L485.2 377.7" stroke="#000" stroke-width="0.9" fill="none"/>
<path d="M120.1 410 V349.5 H447.4 V383" stroke="#000" stroke-width="1.1" fill="none"/>
<path d="M166.5 383 V356.8 H392.4 V383" stroke="#000" stroke-width="1.1" fill="none"/>
<path d="M339.7 356.8 V383" stroke="#000" stroke-width="1.1" fill="none"/>
<circle cx="339.7" cy="356.8" r="1.9" fill="#000" stroke="none" stroke-width="0"/>
<path d="M206.5 383 V363.3 H326.9 V383" stroke="#000" stroke-width="1.1" fill="none"/>
<path d="M158.7 382.8 H161.9 M160.3 382.8 V385" stroke="#000" stroke-width="0.9" fill="none"/>
<path d="M164.9 382.8 H168.1 M166.5 382.8 V385" stroke="#000" stroke-width="0.9" fill="none"/>
<path d="M171.0 382.8 H174.2 M172.6 382.8 V385" stroke="#000" stroke-width="0.9" fill="none"/>
<path d="M198.6 382.8 H201.8 M200.2 382.8 V385" stroke="#000" stroke-width="0.9" fill="none"/>
<path d="M204.9 382.8 H208.1 M206.5 382.8 V385" stroke="#000" stroke-width="0.9" fill="none"/>
<path d="M211.2 382.8 H214.4 M212.8 382.8 V385" stroke="#000" stroke-width="0.9" fill="none"/>
<path d="M318.9 382.8 H322.1 M320.5 382.8 V385" stroke="#000" stroke-width="0.9" fill="none"/>
<path d="M325.3 382.8 H328.5 M326.9 382.8 V385" stroke="#000" stroke-width="0.9" fill="none"/>
<path d="M331.7 382.8 H334.9 M333.3 382.8 V385" stroke="#000" stroke-width="0.9" fill="none"/>
<path d="M338.1 382.8 H341.3 M339.7 382.8 V385" stroke="#000" stroke-width="0.9" fill="none"/>
<path d="M344.4 382.8 H347.6 M346.0 382.8 V385" stroke="#000" stroke-width="0.9" fill="none"/>
<path d="M384.5 382.8 H387.7 M386.1 382.8 V385" stroke="#000" stroke-width="0.9" fill="none"/>
<path d="M390.8 382.8 H394.0 M392.4 382.8 V385" stroke="#000" stroke-width="0.9" fill="none"/>
<path d="M397.1 382.8 H400.3 M398.7 382.8 V385" stroke="#000" stroke-width="0.9" fill="none"/>
<path d="M439.4 382.8 H442.6 M441.0 382.8 V385" stroke="#000" stroke-width="0.9" fill="none"/>
<path d="M445.8 382.8 H449.0 M447.4 382.8 V385" stroke="#000" stroke-width="0.9" fill="none"/>
<path d="M452.1 382.8 H455.3 M453.7 382.8 V385" stroke="#000" stroke-width="0.9" fill="none"/>
<path d="M165.1 369.8 H167.9" stroke="#000" stroke-width="0.9" fill="none"/>
<path d="M205.1 369.8 H207.9" stroke="#000" stroke-width="0.9" fill="none"/>
<path d="M325.5 369.8 H328.3" stroke="#000" stroke-width="0.9" fill="none"/>
<path d="M338.3 369.8 H341.1" stroke="#000" stroke-width="0.9" fill="none"/>
<path d="M391.0 369.8 H393.8" stroke="#000" stroke-width="0.9" fill="none"/>
<path d="M446.0 369.8 H448.8" stroke="#000" stroke-width="0.9" fill="none"/>
<path d="M160.3 383 V410" stroke="#000" stroke-width="1.1" fill="none"/>
<path d="M172.6 383 V395.4 H240.5 V410" stroke="#000" stroke-width="1.1" fill="none"/>
<path d="M200.2 383 V410" stroke="#000" stroke-width="1.1" fill="none"/>
<path d="M212.8 383 V389.8 H280.6 V410" stroke="#000" stroke-width="1.1" fill="none"/>
<path d="M320.4 383 V410" stroke="#000" stroke-width="1.1" fill="none"/>
<path d="M333.3 383 V389.4 H601.7" stroke="#000" stroke-width="1.1" fill="none"/>
<path d="M320.4 395.3 H441 V383" stroke="#000" stroke-width="1.1" fill="none"/>
<circle cx="320.4" cy="395.3" r="2.1" fill="#000" stroke="none" stroke-width="0"/>
<circle cx="345.9" cy="395.3" r="2.1" fill="#000" stroke="none" stroke-width="0"/>
<circle cx="398.7" cy="395.3" r="2.1" fill="#000" stroke="none" stroke-width="0"/>
<circle cx="386.1" cy="389.4" r="2.1" fill="#000" stroke="none" stroke-width="0"/>
<circle cx="453.7" cy="389.4" r="2.1" fill="#000" stroke="none" stroke-width="0"/>
<circle cx="601.7" cy="389.4" r="2.1" fill="#000" stroke="none" stroke-width="0"/>
<path d="M345.9 383 V395.3 M398.7 383 V395.3 M386.1 383 V389.4 M453.7 383 V389.4" stroke="#000" stroke-width="1.1" fill="none"/>
<path d="M521.1 410 V382.6 M521.1 369.4 V349.3 H601.3 V410" stroke="#000" stroke-width="1.1" fill="none"/>
<path d="M515.5 382.6 L523.5 368" stroke="#000" stroke-width="1.1" fill="none"/>
<path d="M519.5 382.6 H522.7" stroke="#000" stroke-width="0.9" fill="none"/>
<path d="M561.5 349.3 V369.5 M561.5 381 V410" stroke="#000" stroke-width="1.1" fill="none"/>
<circle cx="561.5" cy="349.3" r="1.9" fill="#000" stroke="none" stroke-width="0"/>
<circle cx="561.5" cy="375.2" r="5.6" fill="none" stroke="#000" stroke-width="1.1"/>
<path d="M557.5 371.2 L565.5 379.2 M565.5 371.2 L557.5 379.2" stroke="#000" stroke-width="0.9" fill="none"/>
<path d="M567 369 L573 364.5 M569 372 L575 367.5" stroke="#000" stroke-width="0.9" fill="none"/>
<path d="M573.6 364 L571 364.6 L572.4 366.4 Z M575.6 367 L573 367.6 L574.4 369.4 Z" stroke="#000" stroke-width="0.6" fill="#000"/>
<path d="M120.2 403.5 V414" stroke="#000" stroke-width="1.1" fill="none"/>
<path d="M117.0 410.5 L120.2 414.0 L123.4 410.5" stroke="#000" stroke-width="1.2" fill="none"/>
<text x="124.7" y="415.1" font-size="9.4" fill="#000" text-anchor="start" font-weight="normal">T10e/2</text>
<path d="M160.2 403.5 V414" stroke="#000" stroke-width="1.1" fill="none"/>
<path d="M157.0 410.5 L160.2 414.0 L163.4 410.5" stroke="#000" stroke-width="1.2" fill="none"/>
<text x="164.7" y="415.1" font-size="9.4" fill="#000" text-anchor="start" font-weight="normal">T10e/</text>
<text x="166.2" y="424" font-size="9.4" fill="#000" text-anchor="start" font-weight="normal">10</text>
<path d="M200.4 403.5 V414" stroke="#000" stroke-width="1.1" fill="none"/>
<path d="M197.2 410.5 L200.4 414.0 L203.6 410.5" stroke="#000" stroke-width="1.2" fill="none"/>
<text x="204.9" y="415.1" font-size="9.4" fill="#000" text-anchor="start" font-weight="normal">T10e/7</text>
<path d="M240.5 403.5 V414" stroke="#000" stroke-width="1.1" fill="none"/>
<path d="M237.3 410.5 L240.5 414.0 L243.7 410.5" stroke="#000" stroke-width="1.2" fill="none"/>
<text x="245.0" y="415.1" font-size="9.4" fill="#000" text-anchor="start" font-weight="normal">T10e/6</text>
<path d="M280.5 403.5 V414" stroke="#000" stroke-width="1.1" fill="none"/>
<path d="M277.3 410.5 L280.5 414.0 L283.7 410.5" stroke="#000" stroke-width="1.2" fill="none"/>
<text x="285.0" y="415.1" font-size="9.4" fill="#000" text-anchor="start" font-weight="normal">T10e/9</text>
<path d="M320.4 403.5 V414" stroke="#000" stroke-width="1.1" fill="none"/>
<path d="M317.2 410.5 L320.4 414.0 L323.6 410.5" stroke="#000" stroke-width="1.2" fill="none"/>
<text x="324.9" y="415.1" font-size="9.4" fill="#000" text-anchor="start" font-weight="normal">T10e/5</text>
<path d="M521.3 403.5 V414" stroke="#000" stroke-width="1.1" fill="none"/>
<path d="M518.1 410.5 L521.3 414.0 L524.5 410.5" stroke="#000" stroke-width="1.2" fill="none"/>
<text x="525.8" y="415.1" font-size="9.4" fill="#000" text-anchor="start" font-weight="normal">T10e/8</text>
<path d="M561.5 403.5 V414" stroke="#000" stroke-width="1.1" fill="none"/>
<path d="M558.3 410.5 L561.5 414.0 L564.7 410.5" stroke="#000" stroke-width="1.2" fill="none"/>
<text x="566.0" y="415.1" font-size="9.4" fill="#000" text-anchor="start" font-weight="normal">T10e/4</text>
<path d="M601.7 403.5 V414" stroke="#000" stroke-width="1.1" fill="none"/>
<path d="M598.5 410.5 L601.7 414.0 L604.9 410.5" stroke="#000" stroke-width="1.2" fill="none"/>
<text x="606.2" y="415.1" font-size="9.4" fill="#000" text-anchor="start" font-weight="normal">T10e/3</text>
<rect x="117.9" y="413.8" width="4.6" height="27.0" fill="#000" stroke="none" stroke-width="1"/>
<text x="120.2" y="449.3" font-size="9" fill="#000" text-anchor="middle" font-weight="normal">0,35</text>
<text x="120.2" y="459.6" font-size="9" fill="#000" text-anchor="middle" font-weight="normal">ge</text>
<rect x="117.9" y="463.5" width="4.6" height="271.0" fill="#000" stroke="none" stroke-width="1"/>
<rect x="157.9" y="413.8" width="4.6" height="27.0" fill="#000" stroke="none" stroke-width="1"/>
<text x="160.2" y="449.3" font-size="9" fill="#000" text-anchor="middle" font-weight="normal">0,35</text>
<text x="160.2" y="459.6" font-size="9" fill="#000" text-anchor="middle" font-weight="normal">br/ge</text>
<rect x="157.9" y="463.5" width="4.6" height="271.0" fill="#000" stroke="none" stroke-width="1"/>
<rect x="198.1" y="413.8" width="4.6" height="27.0" fill="#000" stroke="none" stroke-width="1"/>
<text x="200.4" y="449.3" font-size="9" fill="#000" text-anchor="middle" font-weight="normal">0,35</text>
<text x="200.4" y="459.6" font-size="9" fill="#000" text-anchor="middle" font-weight="normal">sw/ro</text>
<rect x="198.1" y="463.5" width="4.6" height="271.0" fill="#000" stroke="none" stroke-width="1"/>
<rect x="238.2" y="413.8" width="4.6" height="27.0" fill="#000" stroke="none" stroke-width="1"/>
<text x="240.5" y="449.3" font-size="9" fill="#000" text-anchor="middle" font-weight="normal">0,35</text>
<text x="240.5" y="459.6" font-size="9" fill="#000" text-anchor="middle" font-weight="normal">br/ge</text>
<rect x="238.2" y="463.5" width="4.6" height="58.0" fill="#000" stroke="none" stroke-width="1"/>
<text x="240.5" y="530.2" font-size="9" fill="#000" text-anchor="middle" font-weight="normal">0,5</text>
<text x="240.5" y="540.5" font-size="9" fill="#000" text-anchor="middle" font-weight="normal">br/ge</text>
<rect x="238.2" y="544" width="4.6" height="16" fill="#000" stroke="none" stroke-width="1"/>
<rect x="231.1" y="560.2" width="18.8" height="10.2" fill="#fff" stroke="#000" stroke-width="1"/>
<text x="240.5" y="569.0" font-size="9.6" fill="#000" text-anchor="middle" font-weight="normal">26</text>
<rect x="278.2" y="413.8" width="4.6" height="27.0" fill="#000" stroke="none" stroke-width="1"/>
<text x="280.5" y="449.3" font-size="9" fill="#000" text-anchor="middle" font-weight="normal">0,35</text>
<text x="280.5" y="459.6" font-size="9" fill="#000" text-anchor="middle" font-weight="normal">sw/ro</text>
<rect x="278.2" y="463.5" width="4.6" height="58.0" fill="#000" stroke="none" stroke-width="1"/>
<text x="280.5" y="530.2" font-size="9" fill="#000" text-anchor="middle" font-weight="normal">0,5</text>
<text x="280.5" y="540.5" font-size="9" fill="#000" text-anchor="middle" font-weight="normal">sw/ro</text>
<rect x="278.2" y="544" width="4.6" height="16" fill="#000" stroke="none" stroke-width="1"/>
<rect x="271.1" y="560.2" width="18.8" height="10.2" fill="#fff" stroke="#000" stroke-width="1"/>
<text x="280.5" y="569.0" font-size="9.6" fill="#000" text-anchor="middle" font-weight="normal">25</text>
<rect x="318.1" y="413.8" width="4.6" height="27.0" fill="#000" stroke="none" stroke-width="1"/>
<text x="320.4" y="449.3" font-size="9" fill="#000" text-anchor="middle" font-weight="normal">0,35</text>
<text x="320.4" y="459.6" font-size="9" fill="#000" text-anchor="middle" font-weight="normal">sw/ge</text>
<rect x="318.1" y="463.5" width="4.6" height="96.5" fill="#000" stroke="none" stroke-width="1"/>
<rect x="311.0" y="560.2" width="18.8" height="10.2" fill="#fff" stroke="#000" stroke-width="1"/>
<text x="320.4" y="569.0" font-size="9.6" fill="#000" text-anchor="middle" font-weight="normal">50</text>
<rect x="519.0" y="413.8" width="4.6" height="6.7" fill="#000" stroke="none" stroke-width="1"/>
<circle cx="521.3" cy="423.62" r="2.35" fill="#000" stroke="none" stroke-width="0"/>
<circle cx="521.3" cy="429.88" r="2.35" fill="#000" stroke="none" stroke-width="0"/>
<rect x="519.0" y="433" width="4.6" height="7.8" fill="#000" stroke="none" stroke-width="1"/>
<text x="521.3" y="449.3" font-size="9" fill="#000" text-anchor="middle" font-weight="normal">0,35</text>
<text x="521.3" y="459.6" font-size="9" fill="#000" text-anchor="middle" font-weight="normal">li</text>
<rect x="519.0" y="463.5" width="4.6" height="4.2" fill="#000" stroke="none" stroke-width="1"/>
<circle cx="521.3" cy="471.25" r="2.35" fill="#000" stroke="none" stroke-width="0"/>
<circle cx="521.3" cy="478.35" r="2.35" fill="#000" stroke="none" stroke-width="0"/>
<rect x="519.0" y="481.9" width="4.6" height="21.1" fill="#000" stroke="none" stroke-width="1"/>
<circle cx="521.3" cy="506.15" r="2.35" fill="#000" stroke="none" stroke-width="0"/>
<circle cx="521.3" cy="512.45" r="2.35" fill="#000" stroke="none" stroke-width="0"/>
<rect x="519.0" y="515.6" width="4.6" height="5.9" fill="#000" stroke="none" stroke-width="1"/>
<text x="521.3" y="530.2" font-size="9" fill="#000" text-anchor="middle" font-weight="normal">0,5</text>
<text x="521.3" y="540.5" font-size="9" fill="#000" text-anchor="middle" font-weight="normal">li</text>
<rect x="519.0" y="544" width="4.6" height="16" fill="#000" stroke="none" stroke-width="1"/>
<rect x="511.9" y="560.2" width="18.8" height="10.2" fill="#fff" stroke="#000" stroke-width="1"/>
<text x="521.3" y="569.0" font-size="9.6" fill="#000" text-anchor="middle" font-weight="normal">23</text>
<rect x="559.2" y="413.8" width="4.6" height="27.0" fill="#000" stroke="none" stroke-width="1"/>
<text x="561.5" y="449.3" font-size="9" fill="#000" text-anchor="middle" font-weight="normal">0,35</text>
<text x="561.5" y="459.6" font-size="9" fill="#000" text-anchor="middle" font-weight="normal">gr/bl</text>
<rect x="559.2" y="463.5" width="4.6" height="96.5" fill="#000" stroke="none" stroke-width="1"/>
<rect x="552.1" y="560.2" width="18.8" height="10.2" fill="#fff" stroke="#000" stroke-width="1"/>
<text x="561.5" y="569.0" font-size="9.6" fill="#000" text-anchor="middle" font-weight="normal">47</text>
<rect x="599.4" y="413.8" width="4.6" height="27.0" fill="#000" stroke="none" stroke-width="1"/>
<text x="601.7" y="449.3" font-size="9" fill="#000" text-anchor="middle" font-weight="normal">0,35</text>
<text x="601.7" y="459.6" font-size="9" fill="#000" text-anchor="middle" font-weight="normal">br</text>
<rect x="599.4" y="463.5" width="4.6" height="160.0" fill="#000" stroke="none" stroke-width="1"/>
<text x="601.7" y="632.2" font-size="9" fill="#000" text-anchor="middle" font-weight="normal">2,5</text>
<text x="601.7" y="642.5" font-size="9" fill="#000" text-anchor="middle" font-weight="normal">br</text>
<rect x="599.4" y="645.5" width="4.6" height="49.3" fill="#000" stroke="none" stroke-width="1"/>
<text x="601.7" y="703.2" font-size="9" fill="#000" text-anchor="middle" font-weight="normal">2,5</text>
<text x="601.7" y="713.5" font-size="9" fill="#000" text-anchor="middle" font-weight="normal">br</text>
<rect x="599.4" y="717.3" width="4.6" height="182.7" fill="#000" stroke="none" stroke-width="1"/>
<text x="601.7" y="909.3" font-size="9" fill="#000" text-anchor="middle" font-weight="normal">4,0</text>
<text x="601.7" y="919.5999999999999" font-size="9" fill="#000" text-anchor="middle" font-weight="normal">br</text>
<rect x="599.4" y="922.5" width="4.6" height="28.0" fill="#000" stroke="none" stroke-width="1"/>
<circle cx="601.7" cy="950.5" r="2.6" fill="#000" stroke="none" stroke-width="0"/>
<rect x="70.6" y="595" width="18.8" height="10.2" fill="#fff" stroke="#000" stroke-width="1"/>
<text x="80" y="603.8" font-size="9.6" fill="#000" text-anchor="middle" font-weight="normal">27</text>
<rect x="77.7" y="604.2" width="4.6" height="19.3" fill="#000" stroke="none" stroke-width="1"/>
<text x="80" y="632.2" font-size="9" fill="#000" text-anchor="middle" font-weight="normal">0,5</text>
<text x="80" y="642.5" font-size="9" fill="#000" text-anchor="middle" font-weight="normal">bl/sw</text>
<rect x="77.7" y="645.4" width="4.6" height="49.4" fill="#000" stroke="none" stroke-width="1"/>
<text x="80" y="703.2" font-size="9" fill="#000" text-anchor="middle" font-weight="normal">0,5</text>
<text x="80" y="713.5" font-size="9" fill="#000" text-anchor="middle" font-weight="normal">bl/sw</text>
<path d="M80 717.2 V723.3 H111 L120.2 733" stroke="#000" stroke-width="4.6" fill="none" stroke-linejoin="miter"/>
<rect x="271.1" y="594.8" width="18.8" height="10.2" fill="#fff" stroke="#000" stroke-width="1"/>
<text x="280.5" y="603.5999999999999" font-size="9.6" fill="#000" text-anchor="middle" font-weight="normal">20</text>
<rect x="278.2" y="604.2" width="4.6" height="2.8" fill="#000" stroke="none" stroke-width="1"/>
<circle cx="280.5" cy="610.25" r="2.35" fill="#000" stroke="none" stroke-width="0"/>
<circle cx="280.5" cy="616.75" r="2.35" fill="#000" stroke="none" stroke-width="0"/>
<rect x="278.2" y="620" width="4.6" height="3.5" fill="#000" stroke="none" stroke-width="1"/>
<text x="280.5" y="632.2" font-size="9" fill="#000" text-anchor="middle" font-weight="normal">0,5</text>
<text x="280.5" y="642.5" font-size="9" fill="#000" text-anchor="middle" font-weight="normal">sw</text>
<rect x="278.2" y="645.5" width="4.6" height="3.0" fill="#000" stroke="none" stroke-width="1"/>
<circle cx="280.5" cy="651.62" r="2.35" fill="#000" stroke="none" stroke-width="0"/>
<circle cx="280.5" cy="657.88" r="2.35" fill="#000" stroke="none" stroke-width="0"/>
<rect x="278.2" y="661" width="4.6" height="33.8" fill="#000" stroke="none" stroke-width="1"/>
<text x="280.5" y="703.2" font-size="9" fill="#000" text-anchor="middle" font-weight="normal">0,5</text>
<text x="280.5" y="713.5" font-size="9" fill="#000" text-anchor="middle" font-weight="normal">sw</text>
<rect x="278.2" y="717.3" width="4.6" height="17.2" fill="#000" stroke="none" stroke-width="1"/>
<rect x="358.5" y="581.4" width="4.6" height="42.1" fill="#000" stroke="none" stroke-width="1"/>
<text x="360.8" y="632.2" font-size="9" fill="#000" text-anchor="middle" font-weight="normal">0,5</text>
<text x="360.8" y="642.5" font-size="9" fill="#000" text-anchor="middle" font-weight="normal">br</text>
<rect x="358.5" y="645.5" width="4.6" height="89.0" fill="#000" stroke="none" stroke-width="1"/>
<circle cx="360.8" cy="581.4" r="2.6" fill="#000" stroke="none" stroke-width="0"/>
<line x1="360.8" y1="581.4" x2="615.5" y2="581.4" stroke="#000" stroke-width="1.1"/>
<circle cx="601.7" cy="581.4" r="2.6" fill="#000" stroke="none" stroke-width="0"/>
<circle cx="625.4" cy="581.4" r="9.4" fill="#fff" stroke="#000" stroke-width="1.1"/>
<text x="625.4" y="584.8" font-size="9" fill="#000" text-anchor="middle" font-weight="normal">205</text>
<rect x="431.8" y="594.8" width="18.8" height="10.2" fill="#fff" stroke="#000" stroke-width="1"/>
<text x="441.2" y="603.5999999999999" font-size="9.6" fill="#000" text-anchor="middle" font-weight="normal">50</text>
<rect x="438.9" y="604.2" width="4.6" height="19.3" fill="#000" stroke="none" stroke-width="1"/>
<text x="441.2" y="632.2" font-size="9" fill="#000" text-anchor="middle" font-weight="normal">0,5</text>
<text x="441.2" y="642.5" font-size="9" fill="#000" text-anchor="middle" font-weight="normal">sw/ws</text>
<rect x="438.9" y="645.5" width="4.6" height="49.3" fill="#000" stroke="none" stroke-width="1"/>
<rect x="470.90000000000003" y="594.8" width="18.8" height="10.2" fill="#fff" stroke="#000" stroke-width="1"/>
<text x="480.3" y="603.5999999999999" font-size="9.6" fill="#000" text-anchor="middle" font-weight="normal">24</text>
<rect x="478.0" y="604.2" width="4.6" height="19.3" fill="#000" stroke="none" stroke-width="1"/>
<text x="480.3" y="632.2" font-size="9" fill="#000" text-anchor="middle" font-weight="normal">1,5</text>
<text x="480.3" y="642.5" font-size="9" fill="#000" text-anchor="middle" font-weight="normal">ws</text>
<rect x="478.0" y="645.5" width="4.6" height="49.3" fill="#000" stroke="none" stroke-width="1"/>
<text x="441.2" y="703.2" font-size="9" fill="#000" text-anchor="middle" font-weight="normal">0,5</text>
<text x="441.2" y="713.5" font-size="9" fill="#000" text-anchor="middle" font-weight="normal">sw/ws</text>
<text x="480.3" y="703.2" font-size="9" fill="#000" text-anchor="middle" font-weight="normal">1,0</text>
<text x="480.3" y="713.5" font-size="9" fill="#000" text-anchor="middle" font-weight="normal">ws</text>
<rect x="438.9" y="717.3" width="4.6" height="17.2" fill="#000" stroke="none" stroke-width="1"/>
<rect x="478.0" y="717.3" width="4.6" height="17.2" fill="#000" stroke="none" stroke-width="1"/>
<rect x="519.0" y="601" width="4.6" height="5" fill="#000" stroke="none" stroke-width="1"/>
<rect x="519.0" y="601" width="19.0" height="4.6" fill="#000"/>
<circle cx="542" cy="603.3" r="2.35" fill="#000" stroke="none" stroke-width="0"/>
<circle cx="548" cy="603.3" r="2.35" fill="#000" stroke="none" stroke-width="0"/>
<rect x="552" y="601" width="26" height="4.6" fill="#000" stroke="none" stroke-width="1"/>
<circle cx="582" cy="603.3" r="2.35" fill="#000" stroke="none" stroke-width="0"/>
<circle cx="588" cy="603.3" r="2.35" fill="#000" stroke="none" stroke-width="0"/>
<rect x="591.5" y="601" width="6" height="4.6" fill="#000" stroke="none" stroke-width="1"/>
<rect x="604.5" y="601" width="5" height="4.6" fill="#000" stroke="none" stroke-width="1"/>
<circle cx="613" cy="603.3" r="2.35" fill="#000" stroke="none" stroke-width="0"/>
<circle cx="620" cy="603.3" r="2.35" fill="#000" stroke="none" stroke-width="0"/>
<rect x="624" y="601" width="5" height="4.6" fill="#000" stroke="none" stroke-width="1"/>
<text x="635.5" y="606.5" font-size="9" fill="#000" text-anchor="start" font-weight="normal">a</text>
<rect x="519.0" y="601" width="4.6" height="5" fill="#000" stroke="none" stroke-width="1"/>
<circle cx="521.3" cy="609.55" r="2.35" fill="#000" stroke="none" stroke-width="0"/>
<circle cx="521.3" cy="616.65" r="2.35" fill="#000" stroke="none" stroke-width="0"/>
<rect x="519.0" y="620.2" width="4.6" height="3.3" fill="#000" stroke="none" stroke-width="1"/>
<rect x="559.2" y="614.2" width="18" height="4.6" fill="#000" stroke="none" stroke-width="1"/>
<circle cx="582" cy="616.5" r="2.35" fill="#000" stroke="none" stroke-width="0"/>
<circle cx="588" cy="616.5" r="2.35" fill="#000" stroke="none" stroke-width="0"/>
<rect x="591.5" y="614.2" width="6" height="4.6" fill="#000" stroke="none" stroke-width="1"/>
<rect x="604.5" y="614.2" width="5" height="4.6" fill="#000" stroke="none" stroke-width="1"/>
<circle cx="613" cy="616.5" r="2.35" fill="#000" stroke="none" stroke-width="0"/>
<circle cx="620" cy="616.5" r="2.35" fill="#000" stroke="none" stroke-width="0"/>
<rect x="624" y="614.2" width="5" height="4.6" fill="#000" stroke="none" stroke-width="1"/>
<text x="635.5" y="619.7" font-size="9" fill="#000" text-anchor="start" font-weight="normal">b</text>
<rect x="559.2" y="614.2" width="4.6" height="9.3" fill="#000" stroke="none" stroke-width="1"/>
<text x="521.3" y="632.2" font-size="9" fill="#000" text-anchor="middle" font-weight="normal">0,5</text>
<text x="521.3" y="642.5" font-size="9" fill="#000" text-anchor="middle" font-weight="normal">ge/bl</text>
<text x="561.5" y="632.2" font-size="9" fill="#000" text-anchor="middle" font-weight="normal">0,5</text>
<text x="561.5" y="642.5" font-size="9" fill="#000" text-anchor="middle" font-weight="normal">ge/gn</text>
<rect x="519.0" y="645.5" width="4.6" height="3.0" fill="#000" stroke="none" stroke-width="1"/>
<circle cx="521.3" cy="651.62" r="2.35" fill="#000" stroke="none" stroke-width="0"/>
<circle cx="521.3" cy="657.88" r="2.35" fill="#000" stroke="none" stroke-width="0"/>
<rect x="519.0" y="661" width="4.6" height="33.8" fill="#000" stroke="none" stroke-width="1"/>
<rect x="559.2" y="645.5" width="4.6" height="3.0" fill="#000" stroke="none" stroke-width="1"/>
<circle cx="561.5" cy="651.62" r="2.35" fill="#000" stroke="none" stroke-width="0"/>
<circle cx="561.5" cy="657.88" r="2.35" fill="#000" stroke="none" stroke-width="0"/>
<rect x="559.2" y="661" width="4.6" height="33.8" fill="#000" stroke="none" stroke-width="1"/>
<text x="521.3" y="703.2" font-size="9" fill="#000" text-anchor="middle" font-weight="normal">0,5</text>
<text x="521.3" y="713.5" font-size="9" fill="#000" text-anchor="middle" font-weight="normal">ge/bl</text>
<text x="561.5" y="703.2" font-size="9" fill="#000" text-anchor="middle" font-weight="normal">0,5</text>
<text x="561.5" y="713.5" font-size="9" fill="#000" text-anchor="middle" font-weight="normal">ge/gn</text>
<rect x="519.0" y="717.3" width="4.6" height="17.2" fill="#000" stroke="none" stroke-width="1"/>
<rect x="559.2" y="717.3" width="4.6" height="17.2" fill="#000" stroke="none" stroke-width="1"/>
<rect x="115.9" y="734.5" width="8.6" height="11" fill="#fff" stroke="#000" stroke-width="1" rx="1"/>
<path d="M120.2 745.5 V737.0 M117.2 740.0 Q120.2 736.0 123.2 740.0" stroke="#000" stroke-width="0.9" fill="none"/>
<text x="127.2" y="746" font-size="15.5" fill="#000" text-anchor="start" font-weight="normal">T</text>
<text x="136.0" y="746" font-size="10" fill="#000" text-anchor="start" font-weight="normal">12c/</text>
<text x="135.7" y="755.8" font-size="10" fill="#000" text-anchor="start" font-weight="normal">7</text>
<rect x="155.89999999999998" y="734.5" width="8.6" height="11" fill="#fff" stroke="#000" stroke-width="1" rx="1"/>
<path d="M160.2 745.5 V737.0 M157.2 740.0 Q160.2 736.0 163.2 740.0" stroke="#000" stroke-width="0.9" fill="none"/>
<text x="167.2" y="746" font-size="15.5" fill="#000" text-anchor="start" font-weight="normal">T</text>
<text x="176.0" y="746" font-size="10" fill="#000" text-anchor="start" font-weight="normal">12c/</text>
<text x="175.7" y="755.8" font-size="10" fill="#000" text-anchor="start" font-weight="normal">8</text>
<rect x="196.1" y="734.5" width="8.6" height="11" fill="#fff" stroke="#000" stroke-width="1" rx="1"/>
<path d="M200.4 745.5 V737.0 M197.4 740.0 Q200.4 736.0 203.4 740.0" stroke="#000" stroke-width="0.9" fill="none"/>
<text x="207.4" y="746" font-size="15.5" fill="#000" text-anchor="start" font-weight="normal">T</text>
<text x="216.20000000000002" y="746" font-size="10" fill="#000" text-anchor="start" font-weight="normal">12c/</text>
<text x="215.9" y="755.8" font-size="10" fill="#000" text-anchor="start" font-weight="normal">6</text>
<rect x="276.2" y="734.5" width="8.6" height="11" fill="#fff" stroke="#000" stroke-width="1" rx="1"/>
<path d="M280.5 745.5 V737.0 M277.5 740.0 Q280.5 736.0 283.5 740.0" stroke="#000" stroke-width="0.9" fill="none"/>
<text x="287.5" y="746" font-size="15.5" fill="#000" text-anchor="start" font-weight="normal">T</text>
<text x="296.3" y="746" font-size="10" fill="#000" text-anchor="start" font-weight="normal">12c/</text>
<text x="296.0" y="755.8" font-size="10" fill="#000" text-anchor="start" font-weight="normal">3</text>
<rect x="436.9" y="734.5" width="8.6" height="11" fill="#fff" stroke="#000" stroke-width="1" rx="1"/>
<path d="M441.2 745.5 V737.0 M438.2 740.0 Q441.2 736.0 444.2 740.0" stroke="#000" stroke-width="0.9" fill="none"/>
<text x="448.2" y="746" font-size="15.5" fill="#000" text-anchor="start" font-weight="normal">T</text>
<text x="457.0" y="746" font-size="10" fill="#000" text-anchor="start" font-weight="normal">12c/</text>
<text x="453.7" y="755.8" font-size="10" fill="#000" text-anchor="start" font-weight="normal">11</text>
<rect x="476.0" y="734.5" width="8.6" height="11" fill="#fff" stroke="#000" stroke-width="1" rx="1"/>
<path d="M480.3 745.5 V737.0 M477.3 740.0 Q480.3 736.0 483.3 740.0" stroke="#000" stroke-width="0.9" fill="none"/>
<text x="487.3" y="746" font-size="15.5" fill="#000" text-anchor="start" font-weight="normal">T</text>
<text x="496.1" y="746" font-size="10" fill="#000" text-anchor="start" font-weight="normal">12c/</text>
<text x="495.8" y="755.8" font-size="10" fill="#000" text-anchor="start" font-weight="normal">5</text>
<rect x="517.0" y="734.5" width="8.6" height="11" fill="#fff" stroke="#000" stroke-width="1" rx="1"/>
<path d="M521.3 745.5 V737.0 M518.3 740.0 Q521.3 736.0 524.3 740.0" stroke="#000" stroke-width="0.9" fill="none"/>
<text x="528.3" y="746" font-size="15.5" fill="#000" text-anchor="start" font-weight="normal">T</text>
<text x="537.0999999999999" y="746" font-size="10" fill="#000" text-anchor="start" font-weight="normal">12c/</text>
<text x="536.8" y="755.8" font-size="10" fill="#000" text-anchor="start" font-weight="normal">1</text>
<rect x="557.2" y="734.5" width="8.6" height="11" fill="#fff" stroke="#000" stroke-width="1" rx="1"/>
<path d="M561.5 745.5 V737.0 M558.5 740.0 Q561.5 736.0 564.5 740.0" stroke="#000" stroke-width="0.9" fill="none"/>
<text x="568.5" y="746" font-size="15.5" fill="#000" text-anchor="start" font-weight="normal">T</text>
<text x="577.3" y="746" font-size="10" fill="#000" text-anchor="start" font-weight="normal">12c/</text>
<text x="577.0" y="755.8" font-size="10" fill="#000" text-anchor="start" font-weight="normal">2</text>
<rect x="356.5" y="734.5" width="8.6" height="11" fill="#fff" stroke="#000" stroke-width="1" rx="1"/>
<path d="M360.8 745.5 V737.0 M357.8 740.0 Q360.8 736.0 363.8 740.0" stroke="#000" stroke-width="0.9" fill="none"/>
<text x="367.8" y="746" font-size="15.5" fill="#000" text-anchor="start" font-weight="normal">T</text>
<text x="376.6" y="746" font-size="10" fill="#000" text-anchor="start" font-weight="normal">12c/4</text>
<rect x="117.9" y="745.5" width="4.6" height="23.4" fill="#000" stroke="none" stroke-width="1"/>
<text x="120.2" y="778.3" font-size="9" fill="#000" text-anchor="middle" font-weight="normal">0,5</text>
<text x="120.2" y="788.5999999999999" font-size="9" fill="#000" text-anchor="middle" font-weight="normal">sw/ro</text>
<rect x="117.9" y="792.8" width="4.6" height="54.7" fill="#000" stroke="none" stroke-width="1"/>
<rect x="157.9" y="745.5" width="4.6" height="23.4" fill="#000" stroke="none" stroke-width="1"/>
<text x="160.2" y="778.3" font-size="9" fill="#000" text-anchor="middle" font-weight="normal">0,5</text>
<text x="160.2" y="788.5999999999999" font-size="9" fill="#000" text-anchor="middle" font-weight="normal">br/ge</text>
<rect x="157.9" y="792.8" width="4.6" height="54.7" fill="#000" stroke="none" stroke-width="1"/>
<rect x="198.1" y="745.5" width="4.6" height="23.4" fill="#000" stroke="none" stroke-width="1"/>
<text x="200.4" y="778.3" font-size="9" fill="#000" text-anchor="middle" font-weight="normal">0,5</text>
<text x="200.4" y="788.5999999999999" font-size="9" fill="#000" text-anchor="middle" font-weight="normal">bl/sw</text>
<rect x="198.1" y="792.8" width="4.6" height="54.7" fill="#000" stroke="none" stroke-width="1"/>
<rect x="438.9" y="745.5" width="4.6" height="23.4" fill="#000" stroke="none" stroke-width="1"/>
<text x="441.2" y="778.3" font-size="9" fill="#000" text-anchor="middle" font-weight="normal">0,5</text>
<text x="441.2" y="788.5999999999999" font-size="9" fill="#000" text-anchor="middle" font-weight="normal">sw/ws</text>
<rect x="438.9" y="792.8" width="4.6" height="54.7" fill="#000" stroke="none" stroke-width="1"/>
<rect x="478.0" y="745.5" width="4.6" height="23.4" fill="#000" stroke="none" stroke-width="1"/>
<text x="480.3" y="778.3" font-size="9" fill="#000" text-anchor="middle" font-weight="normal">0,5</text>
<text x="480.3" y="788.5999999999999" font-size="9" fill="#000" text-anchor="middle" font-weight="normal">ws</text>
<rect x="478.0" y="792.8" width="4.6" height="54.7" fill="#000" stroke="none" stroke-width="1"/>
<rect x="278.2" y="745.5" width="4.6" height="4.8" fill="#000" stroke="none" stroke-width="1"/>
<circle cx="280.5" cy="753.82" r="2.35" fill="#000" stroke="none" stroke-width="0"/>
<circle cx="280.5" cy="760.88" r="2.35" fill="#000" stroke="none" stroke-width="0"/>
<rect x="278.2" y="764.4" width="4.6" height="4.5" fill="#000" stroke="none" stroke-width="1"/>
<text x="280.5" y="778.3" font-size="9" fill="#000" text-anchor="middle" font-weight="normal">0,5</text>
<text x="280.5" y="788.5999999999999" font-size="9" fill="#000" text-anchor="middle" font-weight="normal">ws/ge</text>
<rect x="278.2" y="792.8" width="4.6" height="9.2" fill="#000" stroke="none" stroke-width="1"/>
<circle cx="280.5" cy="805.0" r="2.35" fill="#000" stroke="none" stroke-width="0"/>
<circle cx="280.5" cy="811.0" r="2.35" fill="#000" stroke="none" stroke-width="0"/>
<rect x="278.2" y="814" width="4.6" height="10" fill="#000" stroke="none" stroke-width="1"/>
<circle cx="280.5" cy="827.45" r="2.35" fill="#000" stroke="none" stroke-width="0"/>
<circle cx="280.5" cy="834.35" r="2.35" fill="#000" stroke="none" stroke-width="0"/>
<rect x="278.2" y="837.8" width="4.6" height="12.2" fill="#000" stroke="none" stroke-width="1"/>
<circle cx="280.5" cy="850" r="2.7" fill="#000" stroke="none" stroke-width="0"/>
<rect x="519.0" y="745.5" width="4.6" height="4.8" fill="#000" stroke="none" stroke-width="1"/>
<circle cx="521.3" cy="753.82" r="2.35" fill="#000" stroke="none" stroke-width="0"/>
<circle cx="521.3" cy="760.88" r="2.35" fill="#000" stroke="none" stroke-width="0"/>
<rect x="519.0" y="764.4" width="4.6" height="4.5" fill="#000" stroke="none" stroke-width="1"/>
<rect x="519.0" y="792.8" width="4.6" height="9.2" fill="#000" stroke="none" stroke-width="1"/>
<circle cx="521.3" cy="805.0" r="2.35" fill="#000" stroke="none" stroke-width="0"/>
<circle cx="521.3" cy="811.0" r="2.35" fill="#000" stroke="none" stroke-width="0"/>
<rect x="519.0" y="814" width="4.6" height="10" fill="#000" stroke="none" stroke-width="1"/>
<circle cx="521.3" cy="827.45" r="2.35" fill="#000" stroke="none" stroke-width="0"/>
<circle cx="521.3" cy="834.35" r="2.35" fill="#000" stroke="none" stroke-width="0"/>
<rect x="519.0" y="837.8" width="4.6" height="9.7" fill="#000" stroke="none" stroke-width="1"/>
<rect x="559.2" y="745.5" width="4.6" height="4.8" fill="#000" stroke="none" stroke-width="1"/>
<circle cx="561.5" cy="753.82" r="2.35" fill="#000" stroke="none" stroke-width="0"/>
<circle cx="561.5" cy="760.88" r="2.35" fill="#000" stroke="none" stroke-width="0"/>
<rect x="559.2" y="764.4" width="4.6" height="4.5" fill="#000" stroke="none" stroke-width="1"/>
<rect x="559.2" y="792.8" width="4.6" height="9.2" fill="#000" stroke="none" stroke-width="1"/>
<circle cx="561.5" cy="805.0" r="2.35" fill="#000" stroke="none" stroke-width="0"/>
<circle cx="561.5" cy="811.0" r="2.35" fill="#000" stroke="none" stroke-width="0"/>
<rect x="559.2" y="814" width="4.6" height="10" fill="#000" stroke="none" stroke-width="1"/>
<circle cx="561.5" cy="827.45" r="2.35" fill="#000" stroke="none" stroke-width="0"/>
<circle cx="561.5" cy="834.35" r="2.35" fill="#000" stroke="none" stroke-width="0"/>
<rect x="559.2" y="837.8" width="4.6" height="9.7" fill="#000" stroke="none" stroke-width="1"/>
<text x="521.3" y="778.3" font-size="9" fill="#000" text-anchor="middle" font-weight="normal">0,5</text>
<text x="521.3" y="788.5999999999999" font-size="9" fill="#000" text-anchor="middle" font-weight="normal">ge/bl</text>
<text x="561.5" y="778.3" font-size="9" fill="#000" text-anchor="middle" font-weight="normal">0,5</text>
<text x="561.5" y="788.5999999999999" font-size="9" fill="#000" text-anchor="middle" font-weight="normal">ge/gn</text>
<path d="M320.4 768.9 V756.3 H351 L360.8 746 L370.5 756.3 H401.2 V768.9" stroke="#000" stroke-width="4.6" fill="none" stroke-linejoin="miter"/>
<rect x="358.5" y="745.5" width="4.6" height="23.4" fill="#000" stroke="none" stroke-width="1"/>
<text x="320.4" y="778.3" font-size="9" fill="#000" text-anchor="middle" font-weight="normal">0,5</text>
<text x="320.4" y="788.5999999999999" font-size="9" fill="#000" text-anchor="middle" font-weight="normal">br</text>
<text x="360.8" y="778.3" font-size="9" fill="#000" text-anchor="middle" font-weight="normal">0,5</text>
<text x="360.8" y="788.5999999999999" font-size="9" fill="#000" text-anchor="middle" font-weight="normal">br</text>
<text x="401.2" y="778.3" font-size="9" fill="#000" text-anchor="middle" font-weight="normal">0,5</text>
<text x="401.2" y="788.5999999999999" font-size="9" fill="#000" text-anchor="middle" font-weight="normal">br</text>
<rect x="318.1" y="792.8" width="4.6" height="57.2" fill="#000" stroke="none" stroke-width="1"/>
<rect x="398.9" y="792.8" width="4.6" height="57.2" fill="#000" stroke="none" stroke-width="1"/>
<rect x="358.5" y="792.8" width="4.6" height="54.7" fill="#000" stroke="none" stroke-width="1"/>
<circle cx="320.4" cy="850" r="2.7" fill="#000" stroke="none" stroke-width="0"/>
<circle cx="401.2" cy="850" r="2.7" fill="#000" stroke="none" stroke-width="0"/>
<circle cx="441.2" cy="850" r="2.7" fill="#000" stroke="none" stroke-width="0"/>
<rect x="438.9" y="847.5" width="4.6" height="2.5" fill="#000" stroke="none" stroke-width="1"/>
<rect x="102.5" y="857.6" width="481" height="47.5" fill="#b2b2b2" stroke="#1a1a1a" stroke-width="1.1"/>
<path d="M120.2 848 V857.6" stroke="#000" stroke-width="1.1" fill="none"/>
<path d="M117.0 851.5 Q120.2 845.0 123.4 851.5" stroke="#000" stroke-width="1.2" fill="none"/>
<text x="125.0" y="852.8" font-size="9.2" fill="#000" text-anchor="start" font-weight="normal">T3a/3</text>
<path d="M160.2 848 V857.6" stroke="#000" stroke-width="1.1" fill="none"/>
<path d="M157.0 851.5 Q160.2 845.0 163.4 851.5" stroke="#000" stroke-width="1.2" fill="none"/>
<text x="165.0" y="852.8" font-size="9.2" fill="#000" text-anchor="start" font-weight="normal">T3a/1</text>
<path d="M200.4 848 V857.6" stroke="#000" stroke-width="1.1" fill="none"/>
<path d="M197.2 851.5 Q200.4 845.0 203.6 851.5" stroke="#000" stroke-width="1.2" fill="none"/>
<text x="205.20000000000002" y="852.8" font-size="9.2" fill="#000" text-anchor="start" font-weight="normal">T3a/2</text>
<path d="M521.3 848 V857.6" stroke="#000" stroke-width="1.1" fill="none"/>
<path d="M518.1 851.5 Q521.3 845.0 524.5 851.5" stroke="#000" stroke-width="1.2" fill="none"/>
<text x="526.0999999999999" y="852.8" font-size="9.2" fill="#000" text-anchor="start" font-weight="normal">T2a/1</text>
<path d="M561.5 848 V857.6" stroke="#000" stroke-width="1.1" fill="none"/>
<path d="M558.3 851.5 Q561.5 845.0 564.7 851.5" stroke="#000" stroke-width="1.2" fill="none"/>
<text x="566.3" y="852.8" font-size="9.2" fill="#000" text-anchor="start" font-weight="normal">T2a/2</text>
<path d="M360.8 848 V857.6" stroke="#000" stroke-width="1.1" fill="none"/>
<path d="M357.6 851.5 Q360.8 845.0 364.0 851.5" stroke="#000" stroke-width="1.2" fill="none"/>
<path d="M480.3 848 V857.6" stroke="#000" stroke-width="1.1" fill="none"/>
<path d="M477.1 851.5 Q480.3 845.0 483.5 851.5" stroke="#000" stroke-width="1.2" fill="none"/>
<path d="M120.2 857.6 V866 M120.2 890 V892.1 H200.4 V890 M200.4 857.6 V866 M160.2 857.6 V892.1" stroke="#000" stroke-width="1.1" fill="none"/>
<circle cx="160.2" cy="892.1" r="2.1" fill="#000" stroke="none" stroke-width="0"/>
<rect x="117.2" y="865.8" width="6" height="4" fill="#000" stroke="none" stroke-width="1"/>
<rect x="117.2" y="885.8" width="6" height="4" fill="#000" stroke="none" stroke-width="1"/>
<circle cx="120.2" cy="877.8" r="8.2" fill="#b2b2b2" stroke="#000" stroke-width="1.1"/>
<text x="120.2" y="881.5999999999999" font-size="10" fill="#000" text-anchor="middle" font-weight="normal">M</text>
<line x1="116.7" y1="882.8" x2="123.7" y2="882.8" stroke="#000" stroke-width="0.7"/>
<rect x="197.4" y="865.8" width="6" height="4" fill="#000" stroke="none" stroke-width="1"/>
<rect x="197.4" y="885.8" width="6" height="4" fill="#000" stroke="none" stroke-width="1"/>
<circle cx="200.4" cy="877.8" r="8.2" fill="#b2b2b2" stroke="#000" stroke-width="1.1"/>
<text x="200.4" y="881.5999999999999" font-size="10" fill="#000" text-anchor="middle" font-weight="normal">M</text>
<line x1="196.9" y1="882.8" x2="203.9" y2="882.8" stroke="#000" stroke-width="0.7"/>
<text x="163.4" y="922.5" font-size="15" fill="#000">V<tspan font-size="9" dx="1">17</tspan></text>
<path d="M280.5 850 V871.5 M280.5 885 V898 H320.4 V850" stroke="#000" stroke-width="1.1" fill="none"/>
<path d="M279 885.5 L287 871.5" stroke="#000" stroke-width="1" fill="none"/>
<path d="M271 878.5 H283 M271 876.5 H281" stroke="#000" stroke-width="1" fill="none"/>
<circle cx="268.3" cy="878" r="2.8" fill="#b2b2b2" stroke="#000" stroke-width="1.1"/>
<path d="M273 875 L270.5 877.5 L273 880" stroke="#000" stroke-width="1" fill="none"/>
<text x="273.4" y="922.5" font-size="15" fill="#000">F<tspan font-size="9" dx="1">260</tspan></text>
<path d="M360.8 849 V867.3 H357.7 V874.5 H364.3 V881.4 H357.7 V887.7 H360.8 V898.3 H480.3 V849" stroke="#000" stroke-width="1.1" fill="none"/>
<text x="367.4" y="922.3" font-size="15" fill="#000">Z<tspan font-size="9" dx="1">4</tspan></text>
<path d="M401.2 850 V892.2 H441.2 V884 M441.2 873 V850" stroke="#000" stroke-width="1.1" fill="none"/>
<circle cx="441.2" cy="878.5" r="5.6" fill="none" stroke="#000" stroke-width="1.1"/>
<path d="M437.2 874.5 L445.2 882.5 M445.2 874.5 L437.2 882.5" stroke="#000" stroke-width="0.9" fill="none"/>
<text x="426.5" y="922.3" font-size="15" fill="#000">L<tspan font-size="9" dx="1">131</tspan></text>
<path d="M521.3 849 V898.8 H561.5 V890 M561.5 866 V849" stroke="#000" stroke-width="1.1" fill="none"/>
<rect x="558.5" y="865.5" width="6" height="4" fill="#000" stroke="none" stroke-width="1"/>
<rect x="558.5" y="885.5" width="6" height="4" fill="#000" stroke="none" stroke-width="1"/>
<circle cx="561.5" cy="877.5" r="8.2" fill="#b2b2b2" stroke="#000" stroke-width="1.1"/>
<text x="561.5" y="881.3" font-size="10" fill="#000" text-anchor="middle" font-weight="normal">M</text>
<line x1="558.0" y1="882.5" x2="565.0" y2="882.5" stroke="#000" stroke-width="0.7"/>
<text x="525.5" y="922.3" font-size="15" fill="#000">V<tspan font-size="9" dx="1">121</tspan></text>
<circle cx="601.7" cy="880.2" r="2.6" fill="#000" stroke="none" stroke-width="0"/>
<line x1="601.7" y1="880.2" x2="616" y2="880.2" stroke="#000" stroke-width="1.1"/>
<circle cx="625.5" cy="880.2" r="9.4" fill="#fff" stroke="#000" stroke-width="1.1"/>
<text x="625.5" y="883.6" font-size="9" fill="#000" text-anchor="middle" font-weight="normal">278</text>
<circle cx="626" cy="934.7" r="9.4" fill="#fff" stroke="#000" stroke-width="1.1"/>
<text x="626" y="938.1" font-size="9" fill="#000" text-anchor="middle" font-weight="normal">34</text>
<rect x="56.2" y="949.8" width="572.5" height="1.5" fill="#333" stroke="none" stroke-width="1"/>
<text x="80" y="965.7" font-size="9" fill="#000" text-anchor="middle" font-weight="bold">1</text>
<text x="120.2" y="965.7" font-size="9" fill="#000" text-anchor="middle" font-weight="bold">2</text>
<text x="160.2" y="965.7" font-size="9" fill="#000" text-anchor="middle" font-weight="bold">3</text>
<text x="200.4" y="965.7" font-size="9" fill="#000" text-anchor="middle" font-weight="bold">4</text>
<text x="240.5" y="965.7" font-size="9" fill="#000" text-anchor="middle" font-weight="bold">5</text>
<text x="280.5" y="965.7" font-size="9" fill="#000" text-anchor="middle" font-weight="bold">6</text>
<text x="320.4" y="965.7" font-size="9" fill="#000" text-anchor="middle" font-weight="bold">7</text>
<text x="360.8" y="965.7" font-size="9" fill="#000" text-anchor="middle" font-weight="bold">8</text>
<text x="401.2" y="965.7" font-size="9" fill="#000" text-anchor="middle" font-weight="bold">9</text>
<text x="441.2" y="965.7" font-size="9" fill="#000" text-anchor="middle" font-weight="bold">10</text>
<text x="480.3" y="965.7" font-size="9" fill="#000" text-anchor="middle" font-weight="bold">11</text>
<text x="521.3" y="965.7" font-size="9" fill="#000" text-anchor="middle" font-weight="bold">12</text>
<text x="561.5" y="965.7" font-size="9" fill="#000" text-anchor="middle" font-weight="bold">13</text>
<text x="601.7" y="965.7" font-size="9" fill="#000" text-anchor="middle" font-weight="bold">14</text>
<rect x="578.2" y="969" width="51.2" height="15.2" fill="#fff" stroke="#000" stroke-width="1"/>
<text x="603.8" y="980" font-size="9.5" fill="#000" text-anchor="middle" font-weight="normal">97-92562</text>
<path d="M707.2 456 L715.2 448.2 L723.2 456" stroke="#6a6a9a" stroke-width="5.5" fill="none" stroke-linecap="butt"/>
<path d="M707.2 456 L715.2 448.2 L723.2 456" stroke="#a8a8d8" stroke-width="3.5" fill="none" stroke-linecap="butt"/>
<path d="M693.5 472.2 L685.7 480.2 L693.5 488.2" stroke="#6a6a9a" stroke-width="5.5" fill="none" stroke-linecap="butt"/>
<path d="M693.5 472.2 L685.7 480.2 L693.5 488.2" stroke="#a8a8d8" stroke-width="3.5" fill="none" stroke-linecap="butt"/>
<path d="M737 472.2 L744.8 480.2 L737 488.2" stroke="#6a6a9a" stroke-width="5.5" fill="none" stroke-linecap="butt"/>
<path d="M737 472.2 L744.8 480.2 L737 488.2" stroke="#a8a8d8" stroke-width="3.5" fill="none" stroke-linecap="butt"/>
<path d="M707.2 505.5 L715.2 513.2 L723.2 505.5" stroke="#6a6a9a" stroke-width="5.5" fill="none" stroke-linecap="butt"/>
<path d="M707.2 505.5 L715.2 513.2 L723.2 505.5" stroke="#a8a8d8" stroke-width="3.5" fill="none" stroke-linecap="butt"/>
<line x1="716.5" y1="560.8" x2="723.5" y2="567.3" stroke="#b07040" stroke-width="2.3"/>
<circle cx="712.8" cy="556.8" r="5.8" fill="#b8b8d8" stroke="#404070" stroke-width="1.1"/>
<line x1="716.5" y1="589.4" x2="723.5" y2="595.9" stroke="#b07040" stroke-width="2.3"/>
<circle cx="712.8" cy="585.4" r="5.8" fill="#b8b8d8" stroke="#404070" stroke-width="1.1"/>
<path d="M709.5 585.4 H716 M712.8 582.1 V588.7" stroke="#000" stroke-width="1.2" fill="none"/>
<line x1="716.5" y1="618.9" x2="723.5" y2="625.4" stroke="#b07040" stroke-width="2.3"/>
<circle cx="712.8" cy="614.9" r="5.8" fill="#b8b8d8" stroke="#404070" stroke-width="1.1"/>
<path d="M709.5 614.9 H716" stroke="#000" stroke-width="1.2" fill="none"/>
<text x="685.5" y="764.7" font-size="10.5" fill="#000" text-anchor="start" font-weight="normal">ws</text>
<text x="705.8" y="764.7" font-size="10.5" fill="#000" text-anchor="start" font-weight="normal">=</text>
<text x="716.9" y="764.7" font-size="10.5" fill="#000" text-anchor="start" font-weight="normal">weiss</text>
<text x="685.5" y="776.95" font-size="10.5" fill="#000" text-anchor="start" font-weight="normal">sw</text>
<text x="705.8" y="776.95" font-size="10.5" fill="#000" text-anchor="start" font-weight="normal">=</text>
<text x="716.9" y="776.95" font-size="10.5" fill="#000" text-anchor="start" font-weight="normal">schwarz</text>
<text x="685.5" y="789.2" font-size="10.5" fill="#000" text-anchor="start" font-weight="normal">ro</text>
<text x="705.8" y="789.2" font-size="10.5" fill="#000" text-anchor="start" font-weight="normal">=</text>
<text x="716.9" y="789.2" font-size="10.5" fill="#000" text-anchor="start" font-weight="normal">rot</text>
<text x="685.5" y="801.45" font-size="10.5" fill="#000" text-anchor="start" font-weight="normal">rt</text>
<text x="705.8" y="801.45" font-size="10.5" fill="#000" text-anchor="start" font-weight="normal">=</text>
<text x="716.9" y="801.45" font-size="10.5" fill="#000" text-anchor="start" font-weight="normal">rot</text>
<text x="685.5" y="813.7" font-size="10.5" fill="#000" text-anchor="start" font-weight="normal">br</text>
<text x="705.8" y="813.7" font-size="10.5" fill="#000" text-anchor="start" font-weight="normal">=</text>
<text x="716.9" y="813.7" font-size="10.5" fill="#000" text-anchor="start" font-weight="normal">braun</text>
<text x="685.5" y="825.95" font-size="10.5" fill="#000" text-anchor="start" font-weight="normal">gn</text>
<text x="705.8" y="825.95" font-size="10.5" fill="#000" text-anchor="start" font-weight="normal">=</text>
<text x="716.9" y="825.95" font-size="10.5" fill="#000" text-anchor="start" font-weight="normal">grün</text>
<text x="685.5" y="838.2" font-size="10.5" fill="#000" text-anchor="start" font-weight="normal">bl</text>
<text x="705.8" y="838.2" font-size="10.5" fill="#000" text-anchor="start" font-weight="normal">=</text>
<text x="716.9" y="838.2" font-size="10.5" fill="#000" text-anchor="start" font-weight="normal">blau</text>
<text x="685.5" y="850.45" font-size="10.5" fill="#000" text-anchor="start" font-weight="normal">gr</text>
<text x="705.8" y="850.45" font-size="10.5" fill="#000" text-anchor="start" font-weight="normal">=</text>
<text x="716.9" y="850.45" font-size="10.5" fill="#000" text-anchor="start" font-weight="normal">grau</text>
<text x="685.5" y="862.7" font-size="10.5" fill="#000" text-anchor="start" font-weight="normal">li</text>
<text x="705.8" y="862.7" font-size="10.5" fill="#000" text-anchor="start" font-weight="normal">=</text>
<text x="716.9" y="862.7" font-size="10.5" fill="#000" text-anchor="start" font-weight="normal">lila</text>
<text x="685.5" y="874.95" font-size="10.5" fill="#000" text-anchor="start" font-weight="normal">vi</text>
<text x="705.8" y="874.95" font-size="10.5" fill="#000" text-anchor="start" font-weight="normal">=</text>
<text x="716.9" y="874.95" font-size="10.5" fill="#000" text-anchor="start" font-weight="normal">lila</text>
<text x="685.5" y="887.2" font-size="10.5" fill="#000" text-anchor="start" font-weight="normal">ge</text>
<text x="705.8" y="887.2" font-size="10.5" fill="#000" text-anchor="start" font-weight="normal">=</text>
<text x="716.9" y="887.2" font-size="10.5" fill="#000" text-anchor="start" font-weight="normal">gelb</text>
<text x="685.5" y="899.45" font-size="10.5" fill="#000" text-anchor="start" font-weight="normal">or</text>
<text x="705.8" y="899.45" font-size="10.5" fill="#000" text-anchor="start" font-weight="normal">=</text>
<text x="716.9" y="899.45" font-size="10.5" fill="#000" text-anchor="start" font-weight="normal">orange</text>
<text x="685.5" y="911.7" font-size="10.5" fill="#000" text-anchor="start" font-weight="normal">rs</text>
<text x="705.8" y="911.7" font-size="10.5" fill="#000" text-anchor="start" font-weight="normal">=</text>
<text x="716.9" y="911.7" font-size="10.5" fill="#000" text-anchor="start" font-weight="normal">rosa</text>
<rect x="236.2" y="487.5" width="8.6" height="10" fill="#fff" stroke="#000" stroke-width="1" rx="1"/>
<path d="M240.5 497.5 V489.5 M237.5 492.5 Q240.5 488.5 243.5 492.5" stroke="#000" stroke-width="0.9" fill="none"/>
<text x="247.5" y="498.0" font-size="15.5" fill="#000" text-anchor="start" font-weight="normal">T</text>
<text x="256.3" y="498.0" font-size="10" fill="#000" text-anchor="start" font-weight="normal">36/</text>
<text x="254.5" y="508.5" font-size="10" fill="#000" text-anchor="start" font-weight="normal">21</text>
<rect x="276.2" y="487.5" width="8.6" height="10" fill="#fff" stroke="#000" stroke-width="1" rx="1"/>
<path d="M280.5 497.5 V489.5 M277.5 492.5 Q280.5 488.5 283.5 492.5" stroke="#000" stroke-width="0.9" fill="none"/>
<text x="287.5" y="498.0" font-size="15.5" fill="#000" text-anchor="start" font-weight="normal">T</text>
<text x="296.3" y="498.0" font-size="10" fill="#000" text-anchor="start" font-weight="normal">36/</text>
<text x="294.5" y="508.5" font-size="10" fill="#000" text-anchor="start" font-weight="normal">20</text>
<rect x="517.0" y="487.2" width="8.6" height="10" fill="#fff" stroke="#000" stroke-width="1" rx="1"/>
<path d="M521.3 497.2 V489.2 M518.3 492.2 Q521.3 488.2 524.3 492.2" stroke="#000" stroke-width="0.9" fill="none"/>
<text x="528.3" y="497.7" font-size="15.5" fill="#000" text-anchor="start" font-weight="normal">T</text>
<text x="537.0999999999999" y="497.7" font-size="10" fill="#000" text-anchor="start" font-weight="normal">36/</text>
<text x="535.3" y="508.2" font-size="10" fill="#000" text-anchor="start" font-weight="normal">32</text>
<rect x="75.7" y="664.5" width="8.6" height="10" fill="#fff" stroke="#000" stroke-width="1" rx="1"/>
<path d="M80.0 674.5 V666.5 M77.0 669.5 Q80.0 665.5 83.0 669.5" stroke="#000" stroke-width="0.9" fill="none"/>
<text x="87" y="675.0" font-size="15.5" fill="#000" text-anchor="start" font-weight="normal">T</text>
<text x="95.8" y="675.0" font-size="10" fill="#000" text-anchor="start" font-weight="normal">36/</text>
<text x="94" y="685.5" font-size="10" fill="#000" text-anchor="start" font-weight="normal">19</text>
<rect x="276.2" y="664.7" width="8.6" height="10" fill="#fff" stroke="#000" stroke-width="1" rx="1"/>
<path d="M280.5 674.7 V666.7 M277.5 669.7 Q280.5 665.7 283.5 669.7" stroke="#000" stroke-width="0.9" fill="none"/>
<text x="287.5" y="675.2" font-size="15.5" fill="#000" text-anchor="start" font-weight="normal">T</text>
<text x="296.3" y="675.2" font-size="10" fill="#000" text-anchor="start" font-weight="normal">36/</text>
<text x="294.5" y="685.7" font-size="10" fill="#000" text-anchor="start" font-weight="normal">25</text>
<rect x="436.9" y="664.8" width="8.6" height="10" fill="#fff" stroke="#000" stroke-width="1" rx="1"/>
<path d="M441.2 674.8 V666.8 M438.2 669.8 Q441.2 665.8 444.2 669.8" stroke="#000" stroke-width="0.9" fill="none"/>
<text x="448.2" y="675.3" font-size="15.5" fill="#000" text-anchor="start" font-weight="normal">T</text>
<text x="457.0" y="675.3" font-size="10" fill="#000" text-anchor="start" font-weight="normal">36/</text>
<text x="455.2" y="685.8" font-size="10" fill="#000" text-anchor="start" font-weight="normal">15</text>
<rect x="476.0" y="664.8" width="8.6" height="10" fill="#fff" stroke="#000" stroke-width="1" rx="1"/>
<path d="M480.3 674.8 V666.8 M477.3 669.8 Q480.3 665.8 483.3 669.8" stroke="#000" stroke-width="0.9" fill="none"/>
<text x="487.3" y="675.3" font-size="15.5" fill="#000" text-anchor="start" font-weight="normal">T</text>
<text x="496.1" y="675.3" font-size="10" fill="#000" text-anchor="start" font-weight="normal">36/</text>
<text x="494.3" y="685.8" font-size="10" fill="#000" text-anchor="start" font-weight="normal">35</text>
<rect x="517.0" y="664.8" width="8.6" height="10" fill="#fff" stroke="#000" stroke-width="1" rx="1"/>
<path d="M521.3 674.8 V666.8 M518.3 669.8 Q521.3 665.8 524.3 669.8" stroke="#000" stroke-width="0.9" fill="none"/>
<text x="528.3" y="675.3" font-size="15.5" fill="#000" text-anchor="start" font-weight="normal">T</text>
<text x="537.0999999999999" y="675.3" font-size="10" fill="#000" text-anchor="start" font-weight="normal">36/</text>
<text x="535.3" y="685.8" font-size="10" fill="#000" text-anchor="start" font-weight="normal">23</text>
<rect x="557.2" y="664.8" width="8.6" height="10" fill="#fff" stroke="#000" stroke-width="1" rx="1"/>
<path d="M561.5 674.8 V666.8 M558.5 669.8 Q561.5 665.8 564.5 669.8" stroke="#000" stroke-width="0.9" fill="none"/>
<text x="568.5" y="675.3" font-size="15.5" fill="#000" text-anchor="start" font-weight="normal">T</text>
<text x="577.3" y="675.3" font-size="10" fill="#000" text-anchor="start" font-weight="normal">36/</text>
<text x="575.5" y="685.8" font-size="10" fill="#000" text-anchor="start" font-weight="normal">24</text>
<rect x="597.4000000000001" y="664.8" width="8.6" height="10" fill="#fff" stroke="#000" stroke-width="1" rx="1"/>
<path d="M601.7 674.8 V666.8 M598.7 669.8 Q601.7 665.8 604.7 669.8" stroke="#000" stroke-width="0.9" fill="none"/>
<text x="608.7" y="675.3" font-size="15.5" fill="#000" text-anchor="start" font-weight="normal">T</text>
<text x="617.5" y="675.3" font-size="10" fill="#000" text-anchor="start" font-weight="normal">36/</text>
<text x="615.7" y="685.8" font-size="10" fill="#000" text-anchor="start" font-weight="normal">34</text>
<circle cx="254.5" cy="495.5" r="31.6" fill="#6ea3fc" stroke="none" stroke-width="0" fill-opacity="0.38"/>
<circle cx="296.5" cy="495.5" r="31.6" fill="#6ea3fc" stroke="none" stroke-width="0" fill-opacity="0.38"/>
<circle cx="536.7" cy="495.2" r="31.6" fill="#6ea3fc" stroke="none" stroke-width="0" fill-opacity="0.38"/>
<circle cx="95.2" cy="672.5" r="31.6" fill="#6ea3fc" stroke="none" stroke-width="0" fill-opacity="0.38"/>
<circle cx="296.4" cy="672.7" r="31.6" fill="#6ea3fc" stroke="none" stroke-width="0" fill-opacity="0.38"/>
<circle cx="455.5" cy="672.8" r="31.6" fill="#6ea3fc" stroke="none" stroke-width="0" fill-opacity="0.38"/>
<circle cx="495.6" cy="672.8" r="31.6" fill="#6ea3fc" stroke="none" stroke-width="0" fill-opacity="0.38"/>
<circle cx="536.4" cy="672.8" r="31.6" fill="#6ea3fc" stroke="none" stroke-width="0" fill-opacity="0.38"/>
<circle cx="576.2" cy="672.8" r="31.6" fill="#6ea3fc" stroke="none" stroke-width="0" fill-opacity="0.38"/>
<circle cx="616.2" cy="672.8" r="31.6" fill="#6ea3fc" stroke="none" stroke-width="0" fill-opacity="0.38"/>
<circle cx="254.5" cy="495.5" r="31.6" fill="none" stroke="#000" stroke-width="1.5"/>
<circle cx="296.5" cy="495.5" r="31.6" fill="none" stroke="#000" stroke-width="1.5"/>
<circle cx="536.7" cy="495.2" r="31.6" fill="none" stroke="#000" stroke-width="1.5"/>
<circle cx="95.2" cy="672.5" r="31.6" fill="none" stroke="#000" stroke-width="1.5"/>
<circle cx="296.4" cy="672.7" r="31.6" fill="none" stroke="#000" stroke-width="1.5"/>
<circle cx="455.5" cy="672.8" r="31.6" fill="none" stroke="#000" stroke-width="1.5"/>
<circle cx="495.6" cy="672.8" r="31.6" fill="none" stroke="#000" stroke-width="1.5"/>
<circle cx="536.4" cy="672.8" r="31.6" fill="none" stroke="#000" stroke-width="1.5"/>
<circle cx="576.2" cy="672.8" r="31.6" fill="none" stroke="#000" stroke-width="1.5"/>
<circle cx="616.2" cy="672.8" r="31.6" fill="none" stroke="#000" stroke-width="1.5"/>
<text x="-1" y="1031.7" font-size="24" fill="#000" text-anchor="start" font-weight="normal" textLength="72" lengthAdjust="spacingAndGlyphs">Sharan</text>
<text x="888.6" y="1029" font-size="16" fill="#000" text-anchor="start" font-weight="normal" textLength="97.8" lengthAdjust="spacingAndGlyphs">Stromlaufplan</text>
<text x="1762.7" y="1032" font-size="24" fill="#000" text-anchor="start" font-weight="normal" textLength="28.3" lengthAdjust="spacingAndGlyphs">Nr.</text>
<text x="1808.9" y="1032" font-size="24" fill="#000" text-anchor="start" font-weight="normal">109</text>
<rect x="0" y="1040" width="1841" height="2" fill="#000" stroke="none" stroke-width="1"/>
<text x="867.5" y="1055.1" font-size="13" fill="#000" text-anchor="start" font-weight="bold" textLength="625" lengthAdjust="spacingAndGlyphs">Schalter für beheizbare Heckscheibe, Relais für beheizbare Außenspiegel, beheizbare Heckscheibe</text>
<text x="867.5" y="1070.8" font-size="13.3" fill="#000" text-anchor="start" font-weight="normal">F261</text>
<text x="916" y="1070.8" font-size="13" fill="#000" text-anchor="start" font-weight="normal">-</text>
<text x="929.7" y="1070.8" font-size="13.3" fill="#000" text-anchor="start" font-weight="normal" textLength="315" lengthAdjust="spacingAndGlyphs">Kontaktschalter für Spiegelanklappung, Beifahrerseite</text>
<text x="867.5" y="1088.5" font-size="13.3" fill="#000" text-anchor="start" font-weight="normal">J351</text>
<text x="916" y="1088.5" font-size="13" fill="#000" text-anchor="start" font-weight="normal">-</text>
<text x="929.7" y="1088.5" font-size="13.3" fill="#000" text-anchor="start" font-weight="normal" textLength="226" lengthAdjust="spacingAndGlyphs">Steuergerät für Scheibenklappfunktion</text>
<rect x="1165" y="1080" width="18" height="12.5" fill="#8a8a8a" stroke="#6a6a6a" stroke-width="1"/>
<rect x="1170" y="1077" width="7" height="3" fill="#8a8a8a" stroke="none" stroke-width="1"/>
<rect x="57.5" y="1065.4" width="572" height="30" fill="#b2b2b2" stroke="none" stroke-width="1"/>
<rect x="57.5" y="1068.8" width="572" height="1.7" fill="#4a4a4a" stroke="none" stroke-width="1"/>
<circle cx="341" cy="1084" r="9.2" fill="none" stroke="#000" stroke-width="1.1"/>
<path d="M338.5 1079 V1090 M338.5 1083.6 L343.9 1079" stroke="#000" stroke-width="1.1" fill="none"/>
<rect x="1029" y="484" width="806" height="535" fill="#fff" stroke="none" stroke-width="1"/>
<svg x="1030" y="515" width="787" height="503" viewBox="1030 515 787 503" overflow="hidden">
<path d="M1039.1 733.9 A15.65 15.65 0 1 1 1067.9 733.9" fill="none" stroke="#000" stroke-width="1.3"/>
<text x="1053.8" y="730.4" font-size="10" fill="#000" text-anchor="middle" font-weight="normal">45</text>
<text x="1087.9" y="724.3" font-size="13.3" fill="#222" text-anchor="start" font-weight="normal" textLength="245.4" lengthAdjust="spacingAndGlyphs">Massepunkt hinter Schalttafel Mitte -Pfeil-</text>
<rect x="1441" y="480" width="366" height="214" fill="none" stroke="#000" stroke-width="2.4"/>
<rect x="1713.5" y="662.5" width="83" height="21" fill="#fff" stroke="#000" stroke-width="1"/>
<text x="1755" y="677.5" font-size="11.5" fill="#000" text-anchor="middle" font-weight="normal" textLength="67" lengthAdjust="spacingAndGlyphs">N97-11306</text>
<svg x="1441" y="515" width="366" height="179" viewBox="1441 515 366 179" overflow="hidden">
<g fill="none" stroke="#000" stroke-linecap="round" stroke-linejoin="round" stroke-width="1">
<path d="M1458 614 C1470 590 1483 569 1495 558 C1502 552 1508 542 1517 535 L1527 538 M1470 614 C1476 600 1482 590 1488 583 C1495 575 1500 568 1505 564 C1512 555 1518 546 1526 540 M1458 600 C1452 615 1447 630 1444 642 M1477 600 C1468 625 1455 645 1447 660 L1447 675 L1444 682 M1443 690 L1449 686 L1446 694"/>
<path d="M1527 543 V560 M1533 543 V559 L1527 560 M1533 543 L1527 543 M1533 540 L1540 537 L1545 544 L1550 560 L1584 576"/>
<path stroke-width="2" d="M1505 516 C1506 522 1512 524 1518 523 M1520 517 L1540 516"/>
<path stroke-width="2" d="M1541.9 590.4 C1540 582 1538 576 1536.8 576.2 C1532 572 1528 570 1524.6 570.1 C1516 572 1510 576 1507.4 578.3 C1500 584 1495 590 1493.2 593.5 C1490 603 1488 610 1488.1 616.8 C1489 625 1490 630 1492.2 633 C1495 638 1497 640 1499.3 641.1 C1503 643 1506 643 1509.4 642.2 C1515 640 1522 635 1526.7 631"/>
<path d="M1507.4 578.3 C1503 590 1501 598 1502.3 605.6 C1504 615 1508 621 1513.5 625.9 M1523.6 583 C1520 592 1518 598 1518.5 605.6 C1519 615 1522 624 1526.7 629 M1507.4 578.3 L1524 584 L1541 590 M1488.1 616.8 L1526 629 M1491 626 C1495 630 1499 631 1501 631 C1507 630 1512 628 1515 625 M1530 575 C1535 582 1538 588 1539 595"/>
<path stroke-width="2" d="M1548 592.5 C1542 592 1538 591 1536.8 591.4 C1530 595 1527 597 1526.7 598.5 C1523 606 1522 612 1522.6 616.8 C1523 622 1525 627 1527.7 630 M1540 596 C1536 602 1534 608 1535.8 610.7 C1533 620 1532 626 1532.7 631"/>
<path d="M1531 599 C1527 608 1526 618 1530 628 M1535 598 C1531 607 1530 617 1533 627"/>
<path stroke-width="2.2" d="M1584.5 607.7 C1586 603 1587 600 1586.5 600.6 C1586 596 1585 593 1584.5 591.4 C1578 586 1573 584 1569.2 583.8 C1564 584 1561 585 1559.1 585.4 C1554 588 1551 590 1549 591.4 C1543 600 1539 606 1536.8 612.7 C1534 622 1533 632 1533.8 639.1 C1535 645 1537 649 1539.8 651.3 C1544 655 1548 658 1551 658.4 C1555 659 1558 658 1561.1 657.4 C1565 656 1568 654 1571.3 652.3"/>
<path d="M1555 589 C1546 598 1541 610 1540 625 C1540 640 1546 652 1556 656 M1560 590 C1551 600 1546 612 1545 627 C1546 640 1551 650 1560 653 M1566 592 C1557 602 1552 614 1552 628 C1553 640 1558 648 1566 650 M1552 595 C1562 590 1575 589 1585 593"/>
<path stroke-width="2" d="M1556 624 C1562 626 1566 628 1569.2 629 C1574 630 1578 631 1581.4 631 L1600 630 M1556 624 C1557 633 1558 638 1559 641.1 C1562 646 1566 650 1571.3 651.3"/>
<path d="M1559 614.8 C1562 611 1565 608 1568.2 606.7 C1573 606 1577 605.5 1581.4 605.6 M1570 607 C1575 612 1580 620 1582 630 M1590 606 C1592 612 1595 620 1596 630"/>
<path d="M1574 643 L1610 628 L1642 655 L1617 668 L1574 643 M1578 644 L1614 633 L1638 652 M1595 635 L1614 700 M1600 634 L1620 700 M1606 634 L1626 700 M1612 636 L1632 700 M1588 650 L1605 700 M1582 660 L1597 700 M1618 668 L1640 700 M1626 668 L1652 700"/>
<path stroke-width="1.6" d="M1556 700 C1555 680 1558 665 1561 660 M1570 700 C1575 690 1578 682 1579 676 M1580 700 L1580 662 M1575 680 L1600 690"/>
<path stroke-width="2.2" d="M1563.5 554 L1614.5 606 M1568.5 549 L1619.5 601 M1621 606 L1638 630 M1626 603 L1642 627"/>
<path stroke-width="1.6" stroke-dasharray="2 2" d="M1566 551.5 L1617 603.5 M1623.5 604.5 L1640 628.5"/>
<path stroke-width="1" d="M1549 519 L1564 552 M1553 517 L1569 548 M1558 516 L1574 546 M1560 556 L1611 609"/>
<path stroke-width="2" d="M1581 515 C1580 525 1579 535 1580 542 C1581 550 1582 556 1582 559 M1585 577 C1586 590 1586 598 1586 605 M1615 515 C1612 525 1610 535 1610 542 C1611 560 1614 580 1616 597 M1624 515 C1621 525 1619 535 1619 537 C1620 550 1622 565 1625 579"/>
<path d="M1611 530 H1622 M1610 541 H1620 M1612 554 H1621 M1613 568 H1623 M1614 582 H1624 M1582 528 C1590 522 1600 518 1610 516 M1582 545 C1592 538 1600 535 1610 530 M1585 560 C1595 552 1600 550 1611 545 M1586 575 C1595 568 1602 565 1613 560"/>
<path d="M1540 559 L1581 577 M1540 563 L1581 580 M1626 579 C1640 565 1650 558 1660 553 M1646 600 L1638 649 M1650 600 L1642 649"/>
<path stroke-width="2.4" d="M1644 649 C1650 665 1655 680 1660 688 C1665 693 1670 694 1672 694"/>
<path d="M1806 516 L1751.5 531.5 L1701.7 554.6 L1668.5 571.2 C1662 576 1655 582 1650 591 C1645 605 1642 630 1641 651 M1806 522 L1752 537 L1702 560 L1670 577 C1663 582 1657 588 1653 600 C1650 612 1648 630 1646 650 M1806 530.6 L1759 541.7 L1733 554.6 L1687 575.8 L1657.4 593.3"/>
<path d="M1676.8 515 L1701.7 542.6 L1707.2 543 L1720 532.4 L1726.6 535.2 L1728.4 515 M1687 515 L1714 538 M1700 515 L1718 530 M1650 558.3 L1684 538.9 M1653.7 527.8 L1670.3 520.5 M1672 538 C1670 532 1674 528 1678 527"/>
<path stroke-width="2.2" d="M1714.6 515 L1734.9 538 M1730 516 L1745 535 M1736 515 L1748 522 L1748 528 L1740 532"/>
<circle cx="1701.2" cy="527.8" r="4.5"/><path d="M1697 528 H1705.5"/>
<path d="M1650 626 L1662 633 L1662 655 L1676 655 L1676 640 L1668 638"/>
<path d="M1672 692 L1710 677 M1680 694 L1700 682 M1720 694 L1740 688 M1760 694 L1790 686 M1742 694 L1748 688 M1765 694 L1768 688 M1775 694 L1780 688"/>
</g>
</svg>
<rect x="1441.2" y="711.2" width="366" height="295" fill="none" stroke="#000" stroke-width="2.4"/>
<rect x="1713.5" y="974" width="83" height="21" fill="#fff" stroke="#000" stroke-width="1"/>
<text x="1755" y="989" font-size="11.5" fill="#000" text-anchor="middle" font-weight="normal" textLength="67" lengthAdjust="spacingAndGlyphs">N97-11311</text>
<svg x="1441" y="711" width="366" height="295" viewBox="1441 711 366 295" overflow="hidden">
<g fill="none" stroke="#000" stroke-linecap="round" stroke-linejoin="round" stroke-width="1.2">
<path stroke-width="2" d="M1443.5 735 C1455 727 1470 719 1492 714.5 L1507 714.5 C1525 717 1545 724 1562 734 C1575 745 1582 760 1586 774 M1443.5 779.3 C1460 776 1480 773 1501 772.8 C1520 773 1545 776 1560 779.3 L1585 780"/>
<circle cx="1487.7" cy="734" r="10"/><circle cx="1510.8" cy="734" r="10"/>
<path stroke-width="5" d="M1443.5 738.4 C1460 738 1478 748 1481 772.3 M1516 772 C1517 752 1530 737 1544 736.5 C1560 737 1570 752 1569 777.6"/>
<path stroke="#fff" stroke-width="2.6" stroke-dasharray="2.2 1.6" d="M1443.5 738.4 C1460 738 1478 748 1481 772.3 M1516 772 C1517 752 1530 737 1544 736.5 C1560 737 1570 752 1569 777.6"/>
<circle cx="1487.4" cy="734.1" r="8"/><circle cx="1510.9" cy="734.1" r="8"/><path d="M1565 779 C1570 770 1580 770 1586 774 M1572 779 C1574 774 1580 773 1584 776"/>
<path stroke-width="1.8" d="M1560 713.2 L1589.6 741 L1600 761.9 M1575 718 L1612 742 M1583 717 L1612 735"/>
<path stroke-width="2.4" d="M1451 763 L1454 761 M1472 756 L1475 754 M1533 748 L1536 746"/>
<path d="M1443 774 L1461 760 M1445 776 L1462 762 M1531 772 L1548 760 M1491.7 772 L1491.7 757 L1507.4 757 L1507.4 772"/>
<path stroke-width="1.8" d="M1566 776 C1576 770 1586 772 1587 778 L1565 781"/>
<circle cx="1501" cy="797.8" r="15.5" stroke-width="2"/><circle cx="1501" cy="797.8" r="11"/>
<path d="M1492 789 L1497 806 L1501 795 L1505 806 L1510 789"/>
<ellipse cx="1501.7" cy="825" rx="15" ry="4"/>
<path stroke-width="2" d="M1443.3 802 C1448 810 1451 818 1450 822 C1450 828 1448 832 1446.6 834.3 C1449 840 1452 843 1454.4 845.3 C1458 849 1462 851 1466.6 852 C1472 854 1477 855 1482 856.4 M1562 780 C1565 790 1567 800 1566 810 M1548.5 843 L1555 835"/>
<path stroke-width="1.8" d="M1553 815 C1555 795 1570 788 1585 797 C1595 805 1590 830 1583 840 C1575 845 1560 840 1555 830 Z"/>
<path stroke-width="1.6" d="M1560 812 L1578 800 M1560 827 L1580 814"/>
<path fill="#000" stroke="none" d="M1575 810 H1598 V803 L1611 818 L1598 833 V826 H1575 Z"/>
<path stroke-width="1.8" d="M1560 713 C1575 725 1590 735 1602 745 L1603 797 H1807 M1585 715 L1612 735 L1612 745"/>
<path stroke-width="1.6" d="M1625 714 L1631 780 C1632 784 1634 785 1638 785 L1778 785 C1781 785 1781 782 1781 780 L1777 743 C1772 730 1765 720 1754 714"/>
<path d="M1630 714 L1635 745 L1773 745 C1770 735 1765 722 1757 714"/>
<path d="M1644 752 H1705 V781 H1644 Z M1708 752 H1769 V781 H1708 Z M1644 757.6 H1705 M1644 768.6 H1705 M1708 757.6 H1769 M1708 768.6 H1769 M1634 753 H1641 V781 H1634 Z M1772 753 H1778 V781 H1772 Z"/>
<path stroke-width="2" d="M1646 763 H1704 M1646 774 H1704 M1710 763 H1768 M1710 774 H1768"/>
<path stroke-width="1.8" d="M1628 834 C1630 815 1636 808 1648 808 L1772 808 C1782 808 1786 820 1786 834 L1786 921 C1784 935 1776 944 1765 944 L1654 944 C1640 944 1634 935 1634 925 Z"/>
<path d="M1636 836 C1638 822 1642 815 1652 815 L1768 815 C1776 815 1780 822 1780 836 L1780 918 C1778 930 1772 938 1762 938 L1658 938 C1646 938 1640 930 1640 920 Z"/>
<path d="M1641 820 H1656 V915 H1641 Z M1762 820 H1776 V915 H1762 Z M1641 845 H1656 M1641 870 H1656 M1641 893 H1656 M1762 845 H1776 M1762 870 H1776 M1762 893 H1776"/>
<path stroke-width="1.6" d="M1657 820 H1757 V897 H1657 Z M1660 830 H1754 M1663 901 H1754 V930 H1663 Z"/>
<path d="M1668 838 H1680 V845 H1668 Z M1668 848 H1680 V855 H1668 Z M1668 858 H1680 V865 H1668 Z M1737 838 H1750 V845 H1737 Z M1737 848 H1750 V855 H1737 Z M1737 858 H1750 V865 H1737 Z M1684 836 H1734 V866 H1684 Z M1684 858 H1734"/>
<circle cx="1672" cy="884.7" r="7"/><circle cx="1672" cy="884.7" r="4.5"/><circle cx="1745.8" cy="884.7" r="7"/><circle cx="1745.8" cy="884.7" r="4.5"/>
<path d="M1682 878 H1737 V891 H1682 Z M1696 878 V891 M1710 878 V891 M1724 878 V891 M1682 884.5 H1737 M1668 905 H1678 V922 H1668 Z M1681 905 H1738 V915 H1681 Z M1741 905 H1752 V922 H1741 Z"/>
<path stroke-width="3" d="M1668 913 H1678 M1741 913 H1752"/>
<path stroke-width="1.8" d="M1706 916 C1705 905 1712 907 1718 907 C1726 907 1732 910 1731 918 C1730 925 1728 928 1728 935 C1728 945 1727 952 1727 956 C1722 958 1712 958 1706 955 C1705 945 1707 935 1706 916 Z"/>
<ellipse cx="1718.5" cy="913.5" rx="9" ry="5"/>
<path stroke-width="1.6" d="M1706 955 C1700 965 1695 975 1695 990 L1692 1005 M1727 956 C1730 962 1732 968 1732 972 M1690 970 L1705 963 M1690 982 L1708 975 M1700 994 L1712 990"/>
<path stroke-width="1.8" d="M1610 942 C1615 950 1625 953 1640 953 L1705 951 M1727 950 L1807 946"/>
<path stroke-width="1.8" d="M1612 1006 C1612 990 1620 976 1634 975 C1650 975 1660 990 1660 1006 M1660 985 L1670 1006 M1694 1005 L1700 993 M1620 972 L1660 980"/>
<circle cx="1530" cy="919" r="80" stroke-width="0.9"/>
<path stroke-width="2" d="M1446.6 865.3 C1450 860 1458 857 1466 857 L1473 860 L1470 872 C1460 876 1452 875 1447 871 Z M1443 875.2 L1456.6 885.2"/>
<path d="M1453 862 L1458 873 M1458 861 L1462 872 M1476.5 864 L1473 965 M1503 875 L1497 950 M1498.7 857.5 C1505 855 1510 855 1513.1 855.3 L1528.6 866.4 C1526 870 1522 871 1519.7 870.8 Z M1525.3 845.3 L1550.7 870.8 C1558 876 1565 882 1572.9 885.2 L1603.9 896.3 M1491 856.4 C1498 866 1502 872 1506.4 874.1 C1512 878 1516 880 1520.8 880.8 L1537.5 878.6 M1548 843 C1560 848 1572 853 1578 857 L1615 815.4 M1592.8 871.9 L1617.2 822 M1560 900 C1570 912 1585 915 1606 910"/>
<circle cx="1538.9" cy="900.9" r="19" stroke-width="2"/><circle cx="1538" cy="901" r="7"/>
<path stroke-width="1.6" d="M1528 890 H1534 V898 H1528 Z M1546 892 L1551 897 M1543 912 H1548 V920 H1543 Z M1524 905 L1530 915"/>
<circle cx="1523.4" cy="932.7" r="11.5" stroke-width="1.8"/><circle cx="1523.4" cy="932.7" r="5"/>
<path stroke-width="1.8" d="M1532 940 L1586 968 L1589 962 L1535 934"/>
<path stroke-width="2" d="M1497 956 C1497 948 1505 948 1511 948 C1520 948 1524 955 1524 962 C1523 975 1520 985 1510 985 C1500 985 1496 975 1497 956 Z"/>
<path d="M1500 958 C1505 954 1515 954 1521 958 M1525 918 L1513 950"/>
<path stroke-width="1.8" d="M1444 977 H1470 M1586 975 C1600 970 1610 972 1613 980"/>
</g>
</svg>
</svg>
<rect x="1817" y="515" width="17" height="503" fill="#f0f0f0" stroke="none" stroke-width="1"/>
<path d="M1821.5 539.5 L1825.5 535 L1829.5 539.5" stroke="#606060" stroke-width="1.8" fill="none"/>
<path d="M1821.5 993 L1825.5 997.5 L1829.5 993" stroke="#606060" stroke-width="1.8" fill="none"/>
<rect x="1818.5" y="959" width="13" height="26" fill="#c2c2c2" stroke="none" stroke-width="1"/>
<rect x="1029" y="484" width="806" height="31" fill="#0078d7" stroke="none" stroke-width="1"/>
<rect x="1029" y="484" width="1" height="535" fill="#1883d7" stroke="none" stroke-width="1"/>
<rect x="1834" y="484" width="1" height="535" fill="#1883d7" stroke="none" stroke-width="1"/>
<rect x="1029" y="1018" width="806" height="1" fill="#1883d7" stroke="none" stroke-width="1"/>
<text x="1047" y="505" font-size="16" fill="#8ad6f4" text-anchor="middle" font-weight="bold">e</text>
<path d="M1039.5 506 C1036.5 499 1042 491 1052.5 491.2 L1053.3 495" fill="none" stroke="#f5b400" stroke-width="1.9"/>
<text x="1059" y="503.7" font-size="12.5" fill="#fff" text-anchor="start" font-weight="normal" textLength="141" lengthAdjust="spacingAndGlyphs">WI-XML - Internet Explorer</text>
<line x1="1715" y1="499.5" x2="1725" y2="499.5" stroke="#fff" stroke-width="1"/>
<rect x="1760.5" y="494.5" width="9" height="9" fill="none" stroke="#fff" stroke-width="1"/>
<path d="M1806 494 L1816 504 M1816 494 L1806 504" stroke="#fff" stroke-width="1" fill="none"/>
<g fill="#f04444" filter="url(#sh)"><path d="M784.8 254.8 L834.4 334.1 L844.5 327.6 L792.4 250.0 Z"/><path d="M825.8 336.4 L853.4 352.0 L849.8 320.2 Z"/><circle cx="788.6" cy="252.4" r="4.5"/></g>
<g fill="#f04444" filter="url(#sh)"><path d="M677.7 401.0 L580.8 458.9 L587.0 469.1 L682.5 408.6 Z"/><path d="M578.6 450.4 L561.1 476.7 L594.3 474.4 Z"/><circle cx="680.1" cy="404.8" r="4.5"/></g>
<g fill="#f04444" filter="url(#sh)"><path d="M1257.3 382.0 L1155.1 424.1 L1159.8 435.1 L1260.9 390.2 Z"/><path d="M1154.3 415.2 L1133.0 439.6 L1166.1 441.7 Z"/><circle cx="1259.1" cy="386.1" r="4.5"/></g>
<g fill="#f04444" filter="url(#sh)"><path d="M1407.5 353.8 L1419.3 471.2 L1431.2 469.9 L1416.5 352.8 Z"/><path d="M1410.4 469.5 L1427.7 496.2 L1439.5 465.6 Z"/><circle cx="1412.0" cy="353.3" r="4.5"/></g>
</svg></body></html>
